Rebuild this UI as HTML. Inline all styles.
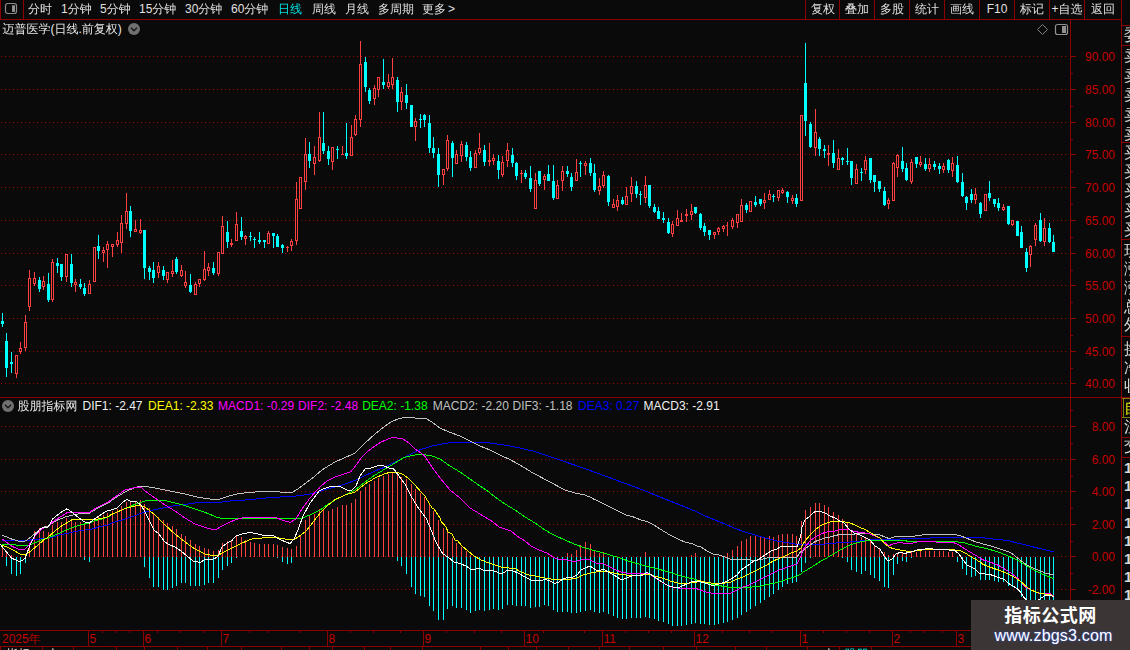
<!DOCTYPE html>
<html><head><meta charset="utf-8"><title>迈普医学</title>
<style>
html,body{margin:0;padding:0;background:#0a0a0a;}
body{width:1130px;height:650px;position:relative;overflow:hidden;font-family:"Liberation Sans","WenQuanYi Zen Hei","Noto Sans CJK SC",sans-serif;font-size:12px;color:#e8e8e8;}
svg{position:absolute;left:0;top:0;}
.top{position:absolute;left:0;top:0;width:1122px;height:19px;border-bottom:1px solid #8c0000;}
.tb{position:absolute;top:0;line-height:19px;height:19px;white-space:nowrap;color:#e0e0e0;font-size:12px;letter-spacing:0px}
.tb.on{color:#00e5e5}
.bt{position:absolute;top:0;height:19px;line-height:19px;text-align:center;border-left:1px solid #8c0000;box-sizing:border-box;color:#e0e0e0;white-space:nowrap}
.ico{position:absolute;left:0;top:0;width:24px;height:19px;border-left:1px solid #8c0000;border-right:1px solid #8c0000;box-sizing:border-box}
.pl{position:absolute;left:1083px;width:32px;height:16px;line-height:16px;color:#c40000;font-size:12px;text-align:right;white-space:nowrap}
.ml{position:absolute;top:632px;height:15px;line-height:15px;color:#c40000;font-size:12px}
.title{position:absolute;left:2.5px;top:21px;height:17px;line-height:17px;font-size:12px;color:#e8e8e8;white-space:nowrap}
.ind{position:absolute;left:0px;top:398px;height:16px;line-height:16px;font-size:12px;white-space:nowrap}
.ind span{position:absolute;top:0}
.side{position:absolute;left:1122px;top:0;width:8px;height:650px;overflow:hidden;border-left:0}
.sr{position:absolute;left:2px;font-size:16px;line-height:18px;color:#d8d8d8;white-space:nowrap}
.wm{position:absolute;left:971px;top:600px;width:159px;height:50px;background:#3c3536;text-align:center}
.wm .a{position:absolute;left:0;width:100%;top:4px;font-family:"Liberation Sans","Noto Sans CJK SC",sans-serif;font-size:18px;font-weight:bold;color:#fff;line-height:24px;letter-spacing:0.5px}
.wm .b{position:absolute;left:3px;width:100%;top:27px;font-size:16px;color:#fff;line-height:18px;letter-spacing:0.18px;text-shadow:0 0 2px #3060ff}
.brt{position:absolute;top:647px;font-size:12px;line-height:14px;color:#f0f0f0;white-space:nowrap}
.circ{position:absolute;width:12px;height:12px;border-radius:50%;background:#707070}
</style></head><body>
<svg width="1130" height="650" viewBox="0 0 1130 650" shape-rendering="crispEdges">
<line x1="1" y1="56.5" x2="1066" y2="56.5" stroke="#a00000" stroke-width="1" stroke-dasharray="1 3"/>
<line x1="1" y1="89.5" x2="1066" y2="89.5" stroke="#a00000" stroke-width="1" stroke-dasharray="1 3"/>
<line x1="1" y1="122.5" x2="1066" y2="122.5" stroke="#a00000" stroke-width="1" stroke-dasharray="1 3"/>
<line x1="1" y1="154.5" x2="1066" y2="154.5" stroke="#a00000" stroke-width="1" stroke-dasharray="1 3"/>
<line x1="1" y1="187.5" x2="1066" y2="187.5" stroke="#a00000" stroke-width="1" stroke-dasharray="1 3"/>
<line x1="1" y1="220.5" x2="1066" y2="220.5" stroke="#a00000" stroke-width="1" stroke-dasharray="1 3"/>
<line x1="1" y1="253.5" x2="1066" y2="253.5" stroke="#a00000" stroke-width="1" stroke-dasharray="1 3"/>
<line x1="1" y1="285.5" x2="1066" y2="285.5" stroke="#a00000" stroke-width="1" stroke-dasharray="1 3"/>
<line x1="1" y1="318.5" x2="1066" y2="318.5" stroke="#a00000" stroke-width="1" stroke-dasharray="1 3"/>
<line x1="1" y1="351.5" x2="1066" y2="351.5" stroke="#a00000" stroke-width="1" stroke-dasharray="1 3"/>
<line x1="1" y1="383.5" x2="1066" y2="383.5" stroke="#a00000" stroke-width="1" stroke-dasharray="1 3"/>
<line x1="1" y1="426.5" x2="1066" y2="426.5" stroke="#a00000" stroke-width="1" stroke-dasharray="1 3"/>
<line x1="1" y1="459.5" x2="1066" y2="459.5" stroke="#a00000" stroke-width="1" stroke-dasharray="1 3"/>
<line x1="1" y1="491.5" x2="1066" y2="491.5" stroke="#a00000" stroke-width="1" stroke-dasharray="1 3"/>
<line x1="1" y1="524.5" x2="1066" y2="524.5" stroke="#a00000" stroke-width="1" stroke-dasharray="1 3"/>
<line x1="1" y1="556.5" x2="1066" y2="556.5" stroke="#a00000" stroke-width="1" stroke-dasharray="1 3"/>
<line x1="1" y1="589.5" x2="1066" y2="589.5" stroke="#a00000" stroke-width="1" stroke-dasharray="1 3"/>
<rect x="2" y="313" width="1" height="14" fill="#00ffff"/>
<rect x="1" y="321" width="3" height="3" fill="#00ffff"/>
<rect x="6" y="333" width="1" height="44" fill="#00ffff"/>
<rect x="5" y="341" width="3" height="27" fill="#00ffff"/>
<rect x="11" y="352" width="1" height="21" fill="#00ffff"/>
<rect x="10" y="362" width="3" height="2" fill="#00ffff"/>
<rect x="16" y="374" width="1" height="4" fill="#ff4040"/>
<rect x="15" y="355" width="3" height="19" fill="#ff4040"/>
<rect x="16" y="356" width="1" height="17" fill="#0a0a0a"/>
<rect x="20" y="342" width="1" height="6" fill="#ff4040"/>
<rect x="20" y="352" width="1" height="2" fill="#ff4040"/>
<rect x="19" y="348" width="3" height="4" fill="#ff4040"/>
<rect x="20" y="349" width="1" height="2" fill="#0a0a0a"/>
<rect x="25" y="315" width="1" height="7" fill="#ff4040"/>
<rect x="25" y="348" width="1" height="3" fill="#ff4040"/>
<rect x="24" y="322" width="3" height="26" fill="#ff4040"/>
<rect x="25" y="323" width="1" height="24" fill="#0a0a0a"/>
<rect x="29" y="270" width="1" height="8" fill="#ff4040"/>
<rect x="29" y="307" width="1" height="4" fill="#ff4040"/>
<rect x="28" y="278" width="3" height="29" fill="#ff4040"/>
<rect x="29" y="279" width="1" height="27" fill="#0a0a0a"/>
<rect x="34" y="272" width="1" height="6" fill="#ff4040"/>
<rect x="34" y="284" width="1" height="2" fill="#ff4040"/>
<rect x="33" y="278" width="3" height="6" fill="#ff4040"/>
<rect x="34" y="279" width="1" height="4" fill="#0a0a0a"/>
<rect x="39" y="277" width="1" height="15" fill="#00ffff"/>
<rect x="38" y="280" width="3" height="9" fill="#00ffff"/>
<rect x="43" y="276" width="1" height="5" fill="#ff4040"/>
<rect x="43" y="287" width="1" height="3" fill="#ff4040"/>
<rect x="42" y="281" width="3" height="6" fill="#ff4040"/>
<rect x="43" y="282" width="1" height="4" fill="#0a0a0a"/>
<rect x="48" y="273" width="1" height="29" fill="#00ffff"/>
<rect x="47" y="284" width="3" height="16" fill="#00ffff"/>
<rect x="52" y="259" width="1" height="3" fill="#ff4040"/>
<rect x="52" y="300" width="1" height="2" fill="#ff4040"/>
<rect x="51" y="262" width="3" height="38" fill="#ff4040"/>
<rect x="52" y="263" width="1" height="36" fill="#0a0a0a"/>
<rect x="57" y="258" width="1" height="15" fill="#00ffff"/>
<rect x="56" y="263" width="3" height="3" fill="#00ffff"/>
<rect x="61" y="264" width="1" height="17" fill="#00ffff"/>
<rect x="60" y="264" width="3" height="13" fill="#00ffff"/>
<rect x="66" y="277" width="1" height="5" fill="#ff4040"/>
<rect x="65" y="254" width="3" height="23" fill="#ff4040"/>
<rect x="66" y="255" width="1" height="21" fill="#0a0a0a"/>
<rect x="71" y="254" width="1" height="33" fill="#00ffff"/>
<rect x="70" y="264" width="3" height="19" fill="#00ffff"/>
<rect x="75" y="279" width="1" height="3" fill="#ff4040"/>
<rect x="75" y="285" width="1" height="7" fill="#ff4040"/>
<rect x="74" y="282" width="3" height="3" fill="#ff4040"/>
<rect x="75" y="283" width="1" height="1" fill="#0a0a0a"/>
<rect x="80" y="279" width="1" height="10" fill="#00ffff"/>
<rect x="79" y="284" width="3" height="3" fill="#00ffff"/>
<rect x="84" y="283" width="1" height="13" fill="#00ffff"/>
<rect x="83" y="288" width="3" height="6" fill="#00ffff"/>
<rect x="89" y="280" width="1" height="4" fill="#ff4040"/>
<rect x="88" y="284" width="3" height="10" fill="#ff4040"/>
<rect x="89" y="285" width="1" height="8" fill="#0a0a0a"/>
<rect x="93" y="247" width="3" height="35" fill="#ff4040"/>
<rect x="94" y="248" width="1" height="33" fill="#0a0a0a"/>
<rect x="98" y="235" width="1" height="24" fill="#00ffff"/>
<rect x="97" y="246" width="3" height="5" fill="#00ffff"/>
<rect x="103" y="247" width="1" height="3" fill="#ff4040"/>
<rect x="103" y="253" width="1" height="9" fill="#ff4040"/>
<rect x="102" y="250" width="3" height="3" fill="#ff4040"/>
<rect x="103" y="251" width="1" height="1" fill="#0a0a0a"/>
<rect x="107" y="241" width="1" height="3" fill="#ff4040"/>
<rect x="107" y="250" width="1" height="18" fill="#ff4040"/>
<rect x="106" y="244" width="3" height="6" fill="#ff4040"/>
<rect x="107" y="245" width="1" height="4" fill="#0a0a0a"/>
<rect x="112" y="247" width="1" height="10" fill="#ff4040"/>
<rect x="111" y="244" width="3" height="3" fill="#ff4040"/>
<rect x="112" y="245" width="1" height="1" fill="#0a0a0a"/>
<rect x="117" y="232" width="1" height="8" fill="#ff4040"/>
<rect x="117" y="245" width="1" height="2" fill="#ff4040"/>
<rect x="116" y="240" width="3" height="5" fill="#ff4040"/>
<rect x="117" y="241" width="1" height="3" fill="#0a0a0a"/>
<rect x="121" y="215" width="1" height="8" fill="#ff4040"/>
<rect x="121" y="243" width="1" height="10" fill="#ff4040"/>
<rect x="120" y="223" width="3" height="20" fill="#ff4040"/>
<rect x="121" y="224" width="1" height="18" fill="#0a0a0a"/>
<rect x="126" y="193" width="1" height="18" fill="#ff4040"/>
<rect x="126" y="224" width="1" height="5" fill="#ff4040"/>
<rect x="125" y="211" width="3" height="13" fill="#ff4040"/>
<rect x="126" y="212" width="1" height="11" fill="#0a0a0a"/>
<rect x="130" y="206" width="1" height="31" fill="#00ffff"/>
<rect x="129" y="211" width="3" height="20" fill="#00ffff"/>
<rect x="135" y="220" width="1" height="9" fill="#ff4040"/>
<rect x="134" y="229" width="3" height="3" fill="#ff4040"/>
<rect x="135" y="230" width="1" height="1" fill="#0a0a0a"/>
<rect x="140" y="219" width="1" height="11" fill="#ff4040"/>
<rect x="140" y="232" width="1" height="2" fill="#ff4040"/>
<rect x="139" y="230" width="3" height="3" fill="#ff4040"/>
<rect x="140" y="231" width="1" height="1" fill="#0a0a0a"/>
<rect x="144" y="230" width="1" height="49" fill="#00ffff"/>
<rect x="143" y="230" width="3" height="38" fill="#00ffff"/>
<rect x="149" y="266" width="1" height="14" fill="#00ffff"/>
<rect x="148" y="268" width="3" height="4" fill="#00ffff"/>
<rect x="153" y="262" width="1" height="21" fill="#00ffff"/>
<rect x="152" y="270" width="3" height="8" fill="#00ffff"/>
<rect x="158" y="262" width="1" height="4" fill="#ff4040"/>
<rect x="158" y="273" width="1" height="5" fill="#ff4040"/>
<rect x="157" y="266" width="3" height="7" fill="#ff4040"/>
<rect x="158" y="267" width="1" height="5" fill="#0a0a0a"/>
<rect x="163" y="266" width="1" height="14" fill="#00ffff"/>
<rect x="162" y="270" width="3" height="6" fill="#00ffff"/>
<rect x="167" y="280" width="1" height="3" fill="#ff4040"/>
<rect x="166" y="272" width="3" height="8" fill="#ff4040"/>
<rect x="167" y="273" width="1" height="6" fill="#0a0a0a"/>
<rect x="172" y="260" width="1" height="11" fill="#ff4040"/>
<rect x="172" y="274" width="1" height="3" fill="#ff4040"/>
<rect x="171" y="271" width="3" height="3" fill="#ff4040"/>
<rect x="172" y="272" width="1" height="1" fill="#0a0a0a"/>
<rect x="176" y="257" width="1" height="17" fill="#00ffff"/>
<rect x="175" y="259" width="3" height="13" fill="#00ffff"/>
<rect x="181" y="265" width="1" height="5" fill="#ff4040"/>
<rect x="181" y="276" width="1" height="1" fill="#ff4040"/>
<rect x="180" y="270" width="3" height="6" fill="#ff4040"/>
<rect x="181" y="271" width="1" height="4" fill="#0a0a0a"/>
<rect x="185" y="271" width="1" height="11" fill="#ff4040"/>
<rect x="185" y="286" width="1" height="2" fill="#ff4040"/>
<rect x="184" y="282" width="3" height="4" fill="#ff4040"/>
<rect x="185" y="283" width="1" height="2" fill="#0a0a0a"/>
<rect x="190" y="274" width="1" height="19" fill="#00ffff"/>
<rect x="189" y="285" width="3" height="7" fill="#00ffff"/>
<rect x="195" y="282" width="1" height="2" fill="#ff4040"/>
<rect x="194" y="284" width="3" height="11" fill="#ff4040"/>
<rect x="195" y="285" width="1" height="9" fill="#0a0a0a"/>
<rect x="199" y="284" width="1" height="3" fill="#ff4040"/>
<rect x="198" y="279" width="3" height="5" fill="#ff4040"/>
<rect x="199" y="280" width="1" height="3" fill="#0a0a0a"/>
<rect x="204" y="251" width="1" height="18" fill="#ff4040"/>
<rect x="204" y="280" width="1" height="1" fill="#ff4040"/>
<rect x="203" y="269" width="3" height="11" fill="#ff4040"/>
<rect x="204" y="270" width="1" height="9" fill="#0a0a0a"/>
<rect x="208" y="263" width="1" height="4" fill="#ff4040"/>
<rect x="208" y="271" width="1" height="5" fill="#ff4040"/>
<rect x="207" y="267" width="3" height="4" fill="#ff4040"/>
<rect x="208" y="268" width="1" height="2" fill="#0a0a0a"/>
<rect x="213" y="262" width="1" height="13" fill="#00ffff"/>
<rect x="212" y="268" width="3" height="5" fill="#00ffff"/>
<rect x="218" y="274" width="1" height="2" fill="#ff4040"/>
<rect x="217" y="252" width="3" height="22" fill="#ff4040"/>
<rect x="218" y="253" width="1" height="20" fill="#0a0a0a"/>
<rect x="222" y="216" width="1" height="10" fill="#ff4040"/>
<rect x="221" y="226" width="3" height="28" fill="#ff4040"/>
<rect x="222" y="227" width="1" height="26" fill="#0a0a0a"/>
<rect x="227" y="221" width="1" height="27" fill="#00ffff"/>
<rect x="226" y="232" width="3" height="10" fill="#00ffff"/>
<rect x="231" y="239" width="1" height="8" fill="#ff4040"/>
<rect x="230" y="243" width="3" height="2" fill="#ff4040"/>
<rect x="236" y="212" width="1" height="12" fill="#ff4040"/>
<rect x="235" y="224" width="3" height="17" fill="#ff4040"/>
<rect x="236" y="225" width="1" height="15" fill="#0a0a0a"/>
<rect x="241" y="217" width="1" height="23" fill="#00ffff"/>
<rect x="240" y="231" width="3" height="6" fill="#00ffff"/>
<rect x="245" y="235" width="1" height="1" fill="#ff4040"/>
<rect x="245" y="239" width="1" height="6" fill="#ff4040"/>
<rect x="244" y="236" width="3" height="3" fill="#ff4040"/>
<rect x="245" y="237" width="1" height="1" fill="#0a0a0a"/>
<rect x="250" y="232" width="1" height="9" fill="#00ffff"/>
<rect x="249" y="236" width="3" height="1" fill="#00ffff"/>
<rect x="254" y="237" width="1" height="11" fill="#00ffff"/>
<rect x="253" y="239" width="3" height="1" fill="#00ffff"/>
<rect x="259" y="232" width="1" height="12" fill="#00ffff"/>
<rect x="258" y="240" width="3" height="2" fill="#00ffff"/>
<rect x="264" y="240" width="1" height="8" fill="#00ffff"/>
<rect x="263" y="240" width="3" height="2" fill="#00ffff"/>
<rect x="268" y="231" width="1" height="2" fill="#ff4040"/>
<rect x="267" y="233" width="3" height="11" fill="#ff4040"/>
<rect x="268" y="234" width="1" height="9" fill="#0a0a0a"/>
<rect x="273" y="233" width="1" height="15" fill="#00ffff"/>
<rect x="272" y="233" width="3" height="3" fill="#00ffff"/>
<rect x="277" y="234" width="1" height="13" fill="#00ffff"/>
<rect x="276" y="236" width="3" height="11" fill="#00ffff"/>
<rect x="282" y="244" width="1" height="9" fill="#00ffff"/>
<rect x="281" y="245" width="3" height="3" fill="#00ffff"/>
<rect x="287" y="246" width="1" height="6" fill="#ff4040"/>
<rect x="286" y="247" width="3" height="1" fill="#ff4040"/>
<rect x="291" y="239" width="1" height="2" fill="#ff4040"/>
<rect x="291" y="246" width="1" height="5" fill="#ff4040"/>
<rect x="290" y="241" width="3" height="5" fill="#ff4040"/>
<rect x="291" y="242" width="1" height="3" fill="#0a0a0a"/>
<rect x="296" y="182" width="1" height="17" fill="#ff4040"/>
<rect x="296" y="241" width="1" height="4" fill="#ff4040"/>
<rect x="295" y="199" width="3" height="42" fill="#ff4040"/>
<rect x="296" y="200" width="1" height="40" fill="#0a0a0a"/>
<rect x="299" y="177" width="3" height="32" fill="#ff4040"/>
<rect x="300" y="178" width="1" height="30" fill="#0a0a0a"/>
<rect x="305" y="138" width="1" height="16" fill="#ff4040"/>
<rect x="305" y="182" width="1" height="8" fill="#ff4040"/>
<rect x="304" y="154" width="3" height="28" fill="#ff4040"/>
<rect x="305" y="155" width="1" height="26" fill="#0a0a0a"/>
<rect x="309" y="142" width="1" height="26" fill="#00ffff"/>
<rect x="308" y="154" width="3" height="7" fill="#00ffff"/>
<rect x="314" y="146" width="1" height="11" fill="#ff4040"/>
<rect x="314" y="164" width="1" height="11" fill="#ff4040"/>
<rect x="313" y="157" width="3" height="7" fill="#ff4040"/>
<rect x="314" y="158" width="1" height="5" fill="#0a0a0a"/>
<rect x="319" y="112" width="1" height="25" fill="#ff4040"/>
<rect x="319" y="161" width="1" height="1" fill="#ff4040"/>
<rect x="318" y="137" width="3" height="24" fill="#ff4040"/>
<rect x="319" y="138" width="1" height="22" fill="#0a0a0a"/>
<rect x="323" y="112" width="1" height="42" fill="#00ffff"/>
<rect x="322" y="143" width="3" height="8" fill="#00ffff"/>
<rect x="328" y="146" width="1" height="19" fill="#00ffff"/>
<rect x="327" y="151" width="3" height="8" fill="#00ffff"/>
<rect x="332" y="162" width="1" height="8" fill="#ff4040"/>
<rect x="331" y="147" width="3" height="15" fill="#ff4040"/>
<rect x="332" y="148" width="1" height="13" fill="#0a0a0a"/>
<rect x="337" y="146" width="1" height="13" fill="#00ffff"/>
<rect x="336" y="149" width="3" height="1" fill="#00ffff"/>
<rect x="342" y="146" width="1" height="9" fill="#ff4040"/>
<rect x="341" y="154" width="3" height="1" fill="#ff4040"/>
<rect x="346" y="123" width="1" height="36" fill="#00ffff"/>
<rect x="345" y="153" width="3" height="3" fill="#00ffff"/>
<rect x="351" y="125" width="1" height="12" fill="#ff4040"/>
<rect x="350" y="137" width="3" height="19" fill="#ff4040"/>
<rect x="351" y="138" width="1" height="17" fill="#0a0a0a"/>
<rect x="355" y="115" width="1" height="4" fill="#ff4040"/>
<rect x="355" y="135" width="1" height="1" fill="#ff4040"/>
<rect x="354" y="119" width="3" height="16" fill="#ff4040"/>
<rect x="355" y="120" width="1" height="14" fill="#0a0a0a"/>
<rect x="360" y="41" width="1" height="23" fill="#ff4040"/>
<rect x="360" y="120" width="1" height="7" fill="#ff4040"/>
<rect x="359" y="64" width="3" height="56" fill="#ff4040"/>
<rect x="360" y="65" width="1" height="54" fill="#0a0a0a"/>
<rect x="365" y="57" width="1" height="35" fill="#00ffff"/>
<rect x="364" y="62" width="3" height="25" fill="#00ffff"/>
<rect x="369" y="88" width="1" height="16" fill="#00ffff"/>
<rect x="368" y="90" width="3" height="11" fill="#00ffff"/>
<rect x="374" y="85" width="1" height="3" fill="#ff4040"/>
<rect x="374" y="99" width="1" height="6" fill="#ff4040"/>
<rect x="373" y="88" width="3" height="11" fill="#ff4040"/>
<rect x="374" y="89" width="1" height="9" fill="#0a0a0a"/>
<rect x="378" y="90" width="1" height="7" fill="#ff4040"/>
<rect x="377" y="77" width="3" height="13" fill="#ff4040"/>
<rect x="378" y="78" width="1" height="11" fill="#0a0a0a"/>
<rect x="383" y="59" width="1" height="30" fill="#00ffff"/>
<rect x="382" y="82" width="3" height="3" fill="#00ffff"/>
<rect x="388" y="74" width="1" height="8" fill="#ff4040"/>
<rect x="388" y="87" width="1" height="2" fill="#ff4040"/>
<rect x="387" y="82" width="3" height="5" fill="#ff4040"/>
<rect x="388" y="83" width="1" height="3" fill="#0a0a0a"/>
<rect x="392" y="58" width="1" height="19" fill="#ff4040"/>
<rect x="392" y="85" width="1" height="4" fill="#ff4040"/>
<rect x="391" y="77" width="3" height="8" fill="#ff4040"/>
<rect x="392" y="78" width="1" height="6" fill="#0a0a0a"/>
<rect x="397" y="77" width="1" height="35" fill="#00ffff"/>
<rect x="396" y="80" width="3" height="22" fill="#00ffff"/>
<rect x="401" y="87" width="1" height="5" fill="#ff4040"/>
<rect x="401" y="102" width="1" height="8" fill="#ff4040"/>
<rect x="400" y="92" width="3" height="10" fill="#ff4040"/>
<rect x="401" y="93" width="1" height="8" fill="#0a0a0a"/>
<rect x="406" y="84" width="1" height="25" fill="#00ffff"/>
<rect x="405" y="95" width="3" height="8" fill="#00ffff"/>
<rect x="411" y="105" width="1" height="22" fill="#00ffff"/>
<rect x="410" y="105" width="3" height="22" fill="#00ffff"/>
<rect x="415" y="118" width="1" height="3" fill="#ff4040"/>
<rect x="415" y="127" width="1" height="14" fill="#ff4040"/>
<rect x="414" y="121" width="3" height="6" fill="#ff4040"/>
<rect x="415" y="122" width="1" height="4" fill="#0a0a0a"/>
<rect x="420" y="114" width="1" height="14" fill="#00ffff"/>
<rect x="419" y="119" width="3" height="1" fill="#00ffff"/>
<rect x="424" y="114" width="1" height="13" fill="#00ffff"/>
<rect x="423" y="115" width="3" height="5" fill="#00ffff"/>
<rect x="429" y="115" width="1" height="38" fill="#00ffff"/>
<rect x="428" y="123" width="3" height="25" fill="#00ffff"/>
<rect x="433" y="137" width="1" height="21" fill="#00ffff"/>
<rect x="432" y="148" width="3" height="5" fill="#00ffff"/>
<rect x="438" y="148" width="1" height="39" fill="#00ffff"/>
<rect x="437" y="154" width="3" height="21" fill="#00ffff"/>
<rect x="443" y="175" width="1" height="10" fill="#ff4040"/>
<rect x="442" y="169" width="3" height="6" fill="#ff4040"/>
<rect x="443" y="170" width="1" height="4" fill="#0a0a0a"/>
<rect x="447" y="135" width="1" height="5" fill="#ff4040"/>
<rect x="447" y="169" width="1" height="2" fill="#ff4040"/>
<rect x="446" y="140" width="3" height="29" fill="#ff4040"/>
<rect x="447" y="141" width="1" height="27" fill="#0a0a0a"/>
<rect x="452" y="141" width="1" height="36" fill="#00ffff"/>
<rect x="451" y="143" width="3" height="15" fill="#00ffff"/>
<rect x="456" y="150" width="1" height="4" fill="#ff4040"/>
<rect x="455" y="154" width="3" height="10" fill="#ff4040"/>
<rect x="456" y="155" width="1" height="8" fill="#0a0a0a"/>
<rect x="461" y="141" width="1" height="3" fill="#ff4040"/>
<rect x="461" y="156" width="1" height="6" fill="#ff4040"/>
<rect x="460" y="144" width="3" height="12" fill="#ff4040"/>
<rect x="461" y="145" width="1" height="10" fill="#0a0a0a"/>
<rect x="466" y="142" width="1" height="19" fill="#00ffff"/>
<rect x="465" y="145" width="3" height="12" fill="#00ffff"/>
<rect x="470" y="151" width="1" height="20" fill="#00ffff"/>
<rect x="469" y="157" width="3" height="11" fill="#00ffff"/>
<rect x="475" y="150" width="1" height="3" fill="#ff4040"/>
<rect x="474" y="153" width="3" height="15" fill="#ff4040"/>
<rect x="475" y="154" width="1" height="13" fill="#0a0a0a"/>
<rect x="479" y="133" width="1" height="15" fill="#ff4040"/>
<rect x="479" y="153" width="1" height="2" fill="#ff4040"/>
<rect x="478" y="148" width="3" height="5" fill="#ff4040"/>
<rect x="479" y="149" width="1" height="3" fill="#0a0a0a"/>
<rect x="484" y="145" width="1" height="21" fill="#00ffff"/>
<rect x="483" y="150" width="3" height="12" fill="#00ffff"/>
<rect x="489" y="143" width="1" height="23" fill="#ff4040"/>
<rect x="488" y="160" width="3" height="2" fill="#ff4040"/>
<rect x="493" y="154" width="1" height="4" fill="#ff4040"/>
<rect x="493" y="161" width="1" height="4" fill="#ff4040"/>
<rect x="492" y="158" width="3" height="3" fill="#ff4040"/>
<rect x="493" y="159" width="1" height="1" fill="#0a0a0a"/>
<rect x="498" y="155" width="1" height="24" fill="#00ffff"/>
<rect x="497" y="161" width="3" height="9" fill="#00ffff"/>
<rect x="502" y="156" width="1" height="6" fill="#ff4040"/>
<rect x="502" y="175" width="1" height="2" fill="#ff4040"/>
<rect x="501" y="162" width="3" height="13" fill="#ff4040"/>
<rect x="502" y="163" width="1" height="11" fill="#0a0a0a"/>
<rect x="507" y="143" width="1" height="7" fill="#ff4040"/>
<rect x="507" y="161" width="1" height="6" fill="#ff4040"/>
<rect x="506" y="150" width="3" height="11" fill="#ff4040"/>
<rect x="507" y="151" width="1" height="9" fill="#0a0a0a"/>
<rect x="512" y="148" width="1" height="19" fill="#00ffff"/>
<rect x="511" y="155" width="3" height="8" fill="#00ffff"/>
<rect x="516" y="162" width="1" height="18" fill="#00ffff"/>
<rect x="515" y="163" width="3" height="13" fill="#00ffff"/>
<rect x="521" y="170" width="1" height="13" fill="#ff4040"/>
<rect x="520" y="173" width="3" height="1" fill="#ff4040"/>
<rect x="525" y="170" width="1" height="9" fill="#00ffff"/>
<rect x="524" y="173" width="3" height="4" fill="#00ffff"/>
<rect x="530" y="166" width="1" height="26" fill="#00ffff"/>
<rect x="529" y="178" width="3" height="11" fill="#00ffff"/>
<rect x="535" y="173" width="1" height="7" fill="#ff4040"/>
<rect x="534" y="180" width="3" height="29" fill="#ff4040"/>
<rect x="535" y="181" width="1" height="27" fill="#0a0a0a"/>
<rect x="539" y="171" width="1" height="15" fill="#00ffff"/>
<rect x="538" y="171" width="3" height="13" fill="#00ffff"/>
<rect x="544" y="174" width="1" height="2" fill="#ff4040"/>
<rect x="544" y="180" width="1" height="10" fill="#ff4040"/>
<rect x="543" y="176" width="3" height="4" fill="#ff4040"/>
<rect x="544" y="177" width="1" height="2" fill="#0a0a0a"/>
<rect x="548" y="165" width="1" height="16" fill="#00ffff"/>
<rect x="547" y="174" width="3" height="7" fill="#00ffff"/>
<rect x="553" y="165" width="1" height="35" fill="#00ffff"/>
<rect x="552" y="181" width="3" height="17" fill="#00ffff"/>
<rect x="557" y="180" width="1" height="5" fill="#ff4040"/>
<rect x="556" y="185" width="3" height="14" fill="#ff4040"/>
<rect x="557" y="186" width="1" height="12" fill="#0a0a0a"/>
<rect x="562" y="166" width="1" height="5" fill="#ff4040"/>
<rect x="562" y="181" width="1" height="10" fill="#ff4040"/>
<rect x="561" y="171" width="3" height="10" fill="#ff4040"/>
<rect x="562" y="172" width="1" height="8" fill="#0a0a0a"/>
<rect x="567" y="166" width="1" height="11" fill="#00ffff"/>
<rect x="566" y="171" width="3" height="3" fill="#00ffff"/>
<rect x="571" y="173" width="1" height="18" fill="#00ffff"/>
<rect x="570" y="177" width="3" height="10" fill="#00ffff"/>
<rect x="576" y="159" width="1" height="13" fill="#ff4040"/>
<rect x="575" y="172" width="3" height="9" fill="#ff4040"/>
<rect x="576" y="173" width="1" height="7" fill="#0a0a0a"/>
<rect x="580" y="161" width="1" height="16" fill="#00ffff"/>
<rect x="579" y="163" width="3" height="1" fill="#00ffff"/>
<rect x="585" y="161" width="1" height="2" fill="#ff4040"/>
<rect x="585" y="166" width="1" height="9" fill="#ff4040"/>
<rect x="584" y="163" width="3" height="3" fill="#ff4040"/>
<rect x="585" y="164" width="1" height="1" fill="#0a0a0a"/>
<rect x="590" y="158" width="1" height="18" fill="#00ffff"/>
<rect x="589" y="163" width="3" height="10" fill="#00ffff"/>
<rect x="594" y="164" width="1" height="28" fill="#00ffff"/>
<rect x="593" y="173" width="3" height="17" fill="#00ffff"/>
<rect x="599" y="178" width="1" height="8" fill="#ff4040"/>
<rect x="599" y="191" width="1" height="4" fill="#ff4040"/>
<rect x="598" y="186" width="3" height="5" fill="#ff4040"/>
<rect x="599" y="187" width="1" height="3" fill="#0a0a0a"/>
<rect x="603" y="171" width="1" height="4" fill="#ff4040"/>
<rect x="603" y="186" width="1" height="2" fill="#ff4040"/>
<rect x="602" y="175" width="3" height="11" fill="#ff4040"/>
<rect x="603" y="176" width="1" height="9" fill="#0a0a0a"/>
<rect x="608" y="175" width="1" height="31" fill="#00ffff"/>
<rect x="607" y="176" width="3" height="26" fill="#00ffff"/>
<rect x="613" y="199" width="1" height="5" fill="#ff4040"/>
<rect x="612" y="204" width="3" height="4" fill="#ff4040"/>
<rect x="613" y="205" width="1" height="2" fill="#0a0a0a"/>
<rect x="617" y="195" width="1" height="5" fill="#ff4040"/>
<rect x="617" y="207" width="1" height="4" fill="#ff4040"/>
<rect x="616" y="200" width="3" height="7" fill="#ff4040"/>
<rect x="617" y="201" width="1" height="5" fill="#0a0a0a"/>
<rect x="622" y="197" width="1" height="8" fill="#00ffff"/>
<rect x="621" y="200" width="3" height="4" fill="#00ffff"/>
<rect x="626" y="187" width="1" height="9" fill="#ff4040"/>
<rect x="625" y="196" width="3" height="9" fill="#ff4040"/>
<rect x="626" y="197" width="1" height="7" fill="#0a0a0a"/>
<rect x="631" y="177" width="1" height="9" fill="#ff4040"/>
<rect x="631" y="194" width="1" height="8" fill="#ff4040"/>
<rect x="630" y="186" width="3" height="8" fill="#ff4040"/>
<rect x="631" y="187" width="1" height="6" fill="#0a0a0a"/>
<rect x="636" y="181" width="1" height="17" fill="#00ffff"/>
<rect x="635" y="186" width="3" height="8" fill="#00ffff"/>
<rect x="640" y="191" width="1" height="14" fill="#00ffff"/>
<rect x="639" y="194" width="3" height="1" fill="#00ffff"/>
<rect x="645" y="176" width="1" height="9" fill="#ff4040"/>
<rect x="645" y="198" width="1" height="5" fill="#ff4040"/>
<rect x="644" y="185" width="3" height="13" fill="#ff4040"/>
<rect x="645" y="186" width="1" height="11" fill="#0a0a0a"/>
<rect x="649" y="185" width="1" height="23" fill="#00ffff"/>
<rect x="648" y="185" width="3" height="21" fill="#00ffff"/>
<rect x="654" y="204" width="1" height="9" fill="#00ffff"/>
<rect x="653" y="207" width="3" height="5" fill="#00ffff"/>
<rect x="658" y="207" width="1" height="12" fill="#00ffff"/>
<rect x="657" y="211" width="3" height="8" fill="#00ffff"/>
<rect x="663" y="212" width="1" height="11" fill="#00ffff"/>
<rect x="662" y="218" width="3" height="2" fill="#00ffff"/>
<rect x="668" y="218" width="1" height="16" fill="#00ffff"/>
<rect x="667" y="222" width="3" height="11" fill="#00ffff"/>
<rect x="672" y="221" width="1" height="3" fill="#ff4040"/>
<rect x="672" y="234" width="1" height="3" fill="#ff4040"/>
<rect x="671" y="224" width="3" height="10" fill="#ff4040"/>
<rect x="672" y="225" width="1" height="8" fill="#0a0a0a"/>
<rect x="677" y="210" width="1" height="8" fill="#ff4040"/>
<rect x="676" y="218" width="3" height="8" fill="#ff4040"/>
<rect x="677" y="219" width="1" height="6" fill="#0a0a0a"/>
<rect x="681" y="213" width="1" height="9" fill="#ff4040"/>
<rect x="680" y="220" width="3" height="2" fill="#ff4040"/>
<rect x="686" y="209" width="1" height="13" fill="#ff4040"/>
<rect x="685" y="214" width="3" height="2" fill="#ff4040"/>
<rect x="691" y="204" width="1" height="7" fill="#ff4040"/>
<rect x="691" y="215" width="1" height="5" fill="#ff4040"/>
<rect x="690" y="211" width="3" height="4" fill="#ff4040"/>
<rect x="691" y="212" width="1" height="2" fill="#0a0a0a"/>
<rect x="695" y="207" width="1" height="7" fill="#00ffff"/>
<rect x="694" y="207" width="3" height="6" fill="#00ffff"/>
<rect x="700" y="213" width="1" height="17" fill="#00ffff"/>
<rect x="699" y="214" width="3" height="14" fill="#00ffff"/>
<rect x="704" y="223" width="1" height="13" fill="#00ffff"/>
<rect x="703" y="226" width="3" height="6" fill="#00ffff"/>
<rect x="709" y="230" width="1" height="10" fill="#00ffff"/>
<rect x="708" y="230" width="3" height="5" fill="#00ffff"/>
<rect x="714" y="235" width="1" height="4" fill="#ff4040"/>
<rect x="713" y="232" width="3" height="3" fill="#ff4040"/>
<rect x="714" y="233" width="1" height="1" fill="#0a0a0a"/>
<rect x="718" y="227" width="1" height="1" fill="#ff4040"/>
<rect x="718" y="232" width="1" height="3" fill="#ff4040"/>
<rect x="717" y="228" width="3" height="4" fill="#ff4040"/>
<rect x="718" y="229" width="1" height="2" fill="#0a0a0a"/>
<rect x="723" y="225" width="1" height="1" fill="#ff4040"/>
<rect x="723" y="228" width="1" height="4" fill="#ff4040"/>
<rect x="722" y="226" width="3" height="3" fill="#ff4040"/>
<rect x="723" y="227" width="1" height="1" fill="#0a0a0a"/>
<rect x="727" y="222" width="1" height="14" fill="#ff4040"/>
<rect x="726" y="225" width="2" height="1" fill="#ff4040"/>
<rect x="732" y="218" width="1" height="2" fill="#ff4040"/>
<rect x="732" y="227" width="1" height="2" fill="#ff4040"/>
<rect x="731" y="220" width="3" height="7" fill="#ff4040"/>
<rect x="732" y="221" width="1" height="5" fill="#0a0a0a"/>
<rect x="737" y="223" width="1" height="5" fill="#ff4040"/>
<rect x="736" y="214" width="3" height="9" fill="#ff4040"/>
<rect x="737" y="215" width="1" height="7" fill="#0a0a0a"/>
<rect x="741" y="199" width="1" height="6" fill="#ff4040"/>
<rect x="740" y="205" width="3" height="17" fill="#ff4040"/>
<rect x="741" y="206" width="1" height="15" fill="#0a0a0a"/>
<rect x="746" y="203" width="1" height="10" fill="#00ffff"/>
<rect x="745" y="205" width="3" height="5" fill="#00ffff"/>
<rect x="749" y="201" width="3" height="11" fill="#ff4040"/>
<rect x="750" y="202" width="1" height="9" fill="#0a0a0a"/>
<rect x="755" y="196" width="1" height="11" fill="#00ffff"/>
<rect x="754" y="202" width="3" height="3" fill="#00ffff"/>
<rect x="760" y="199" width="1" height="7" fill="#00ffff"/>
<rect x="759" y="199" width="3" height="5" fill="#00ffff"/>
<rect x="764" y="193" width="1" height="7" fill="#ff4040"/>
<rect x="764" y="203" width="1" height="6" fill="#ff4040"/>
<rect x="763" y="200" width="3" height="3" fill="#ff4040"/>
<rect x="764" y="201" width="1" height="1" fill="#0a0a0a"/>
<rect x="769" y="190" width="1" height="4" fill="#ff4040"/>
<rect x="768" y="194" width="3" height="6" fill="#ff4040"/>
<rect x="769" y="195" width="1" height="4" fill="#0a0a0a"/>
<rect x="773" y="194" width="1" height="8" fill="#00ffff"/>
<rect x="772" y="196" width="3" height="1" fill="#00ffff"/>
<rect x="778" y="198" width="1" height="3" fill="#ff4040"/>
<rect x="777" y="190" width="3" height="8" fill="#ff4040"/>
<rect x="778" y="191" width="1" height="6" fill="#0a0a0a"/>
<rect x="782" y="188" width="1" height="2" fill="#ff4040"/>
<rect x="782" y="193" width="1" height="1" fill="#ff4040"/>
<rect x="781" y="190" width="3" height="3" fill="#ff4040"/>
<rect x="782" y="191" width="1" height="1" fill="#0a0a0a"/>
<rect x="787" y="191" width="1" height="12" fill="#00ffff"/>
<rect x="786" y="192" width="3" height="5" fill="#00ffff"/>
<rect x="792" y="195" width="1" height="3" fill="#ff4040"/>
<rect x="792" y="200" width="1" height="4" fill="#ff4040"/>
<rect x="791" y="198" width="3" height="3" fill="#ff4040"/>
<rect x="792" y="199" width="1" height="1" fill="#0a0a0a"/>
<rect x="796" y="194" width="1" height="13" fill="#00ffff"/>
<rect x="795" y="198" width="3" height="6" fill="#00ffff"/>
<rect x="800" y="115" width="3" height="86" fill="#ff4040"/>
<rect x="801" y="116" width="1" height="84" fill="#0a0a0a"/>
<rect x="805" y="43" width="1" height="93" fill="#00ffff"/>
<rect x="804" y="83" width="3" height="38" fill="#00ffff"/>
<rect x="810" y="122" width="1" height="26" fill="#00ffff"/>
<rect x="809" y="124" width="3" height="23" fill="#00ffff"/>
<rect x="815" y="109" width="1" height="23" fill="#ff4040"/>
<rect x="815" y="148" width="1" height="8" fill="#ff4040"/>
<rect x="814" y="132" width="3" height="16" fill="#ff4040"/>
<rect x="815" y="133" width="1" height="14" fill="#0a0a0a"/>
<rect x="819" y="137" width="1" height="19" fill="#00ffff"/>
<rect x="818" y="139" width="3" height="10" fill="#00ffff"/>
<rect x="824" y="145" width="1" height="13" fill="#00ffff"/>
<rect x="823" y="149" width="3" height="2" fill="#00ffff"/>
<rect x="828" y="145" width="1" height="21" fill="#ff4040"/>
<rect x="827" y="153" width="3" height="2" fill="#ff4040"/>
<rect x="833" y="140" width="1" height="28" fill="#00ffff"/>
<rect x="832" y="153" width="3" height="10" fill="#00ffff"/>
<rect x="838" y="149" width="1" height="9" fill="#ff4040"/>
<rect x="837" y="158" width="3" height="12" fill="#ff4040"/>
<rect x="838" y="159" width="1" height="10" fill="#0a0a0a"/>
<rect x="842" y="157" width="1" height="8" fill="#00ffff"/>
<rect x="841" y="158" width="3" height="2" fill="#00ffff"/>
<rect x="847" y="148" width="1" height="17" fill="#00ffff"/>
<rect x="846" y="161" width="3" height="1" fill="#00ffff"/>
<rect x="851" y="161" width="1" height="24" fill="#00ffff"/>
<rect x="850" y="161" width="3" height="17" fill="#00ffff"/>
<rect x="856" y="164" width="1" height="5" fill="#ff4040"/>
<rect x="855" y="169" width="3" height="15" fill="#ff4040"/>
<rect x="856" y="170" width="1" height="13" fill="#0a0a0a"/>
<rect x="861" y="168" width="1" height="13" fill="#00ffff"/>
<rect x="860" y="172" width="3" height="1" fill="#00ffff"/>
<rect x="865" y="156" width="1" height="4" fill="#ff4040"/>
<rect x="865" y="170" width="1" height="4" fill="#ff4040"/>
<rect x="864" y="160" width="3" height="10" fill="#ff4040"/>
<rect x="865" y="161" width="1" height="8" fill="#0a0a0a"/>
<rect x="870" y="158" width="1" height="25" fill="#00ffff"/>
<rect x="869" y="158" width="3" height="22" fill="#00ffff"/>
<rect x="874" y="175" width="1" height="17" fill="#00ffff"/>
<rect x="873" y="175" width="3" height="7" fill="#00ffff"/>
<rect x="879" y="181" width="1" height="11" fill="#00ffff"/>
<rect x="878" y="181" width="3" height="8" fill="#00ffff"/>
<rect x="884" y="187" width="1" height="19" fill="#00ffff"/>
<rect x="883" y="191" width="3" height="14" fill="#00ffff"/>
<rect x="888" y="198" width="1" height="2" fill="#ff4040"/>
<rect x="888" y="204" width="1" height="5" fill="#ff4040"/>
<rect x="887" y="200" width="3" height="4" fill="#ff4040"/>
<rect x="888" y="201" width="1" height="2" fill="#0a0a0a"/>
<rect x="893" y="162" width="1" height="1" fill="#ff4040"/>
<rect x="892" y="163" width="3" height="38" fill="#ff4040"/>
<rect x="893" y="164" width="1" height="36" fill="#0a0a0a"/>
<rect x="897" y="154" width="1" height="1" fill="#ff4040"/>
<rect x="897" y="168" width="1" height="9" fill="#ff4040"/>
<rect x="896" y="155" width="3" height="13" fill="#ff4040"/>
<rect x="897" y="156" width="1" height="11" fill="#0a0a0a"/>
<rect x="902" y="147" width="1" height="25" fill="#00ffff"/>
<rect x="901" y="161" width="3" height="8" fill="#00ffff"/>
<rect x="906" y="163" width="1" height="18" fill="#00ffff"/>
<rect x="905" y="168" width="3" height="12" fill="#00ffff"/>
<rect x="911" y="159" width="1" height="3" fill="#ff4040"/>
<rect x="911" y="182" width="1" height="2" fill="#ff4040"/>
<rect x="910" y="162" width="3" height="20" fill="#ff4040"/>
<rect x="911" y="163" width="1" height="18" fill="#0a0a0a"/>
<rect x="916" y="157" width="1" height="11" fill="#00ffff"/>
<rect x="915" y="157" width="3" height="7" fill="#00ffff"/>
<rect x="920" y="156" width="1" height="6" fill="#ff4040"/>
<rect x="920" y="165" width="1" height="2" fill="#ff4040"/>
<rect x="919" y="162" width="3" height="3" fill="#ff4040"/>
<rect x="920" y="163" width="1" height="1" fill="#0a0a0a"/>
<rect x="925" y="158" width="1" height="13" fill="#00ffff"/>
<rect x="924" y="164" width="3" height="5" fill="#00ffff"/>
<rect x="929" y="158" width="1" height="6" fill="#ff4040"/>
<rect x="929" y="169" width="1" height="3" fill="#ff4040"/>
<rect x="928" y="164" width="3" height="5" fill="#ff4040"/>
<rect x="929" y="165" width="1" height="3" fill="#0a0a0a"/>
<rect x="934" y="161" width="1" height="9" fill="#00ffff"/>
<rect x="933" y="164" width="3" height="3" fill="#00ffff"/>
<rect x="939" y="163" width="1" height="11" fill="#00ffff"/>
<rect x="938" y="166" width="3" height="3" fill="#00ffff"/>
<rect x="943" y="163" width="1" height="3" fill="#ff4040"/>
<rect x="943" y="170" width="1" height="3" fill="#ff4040"/>
<rect x="942" y="166" width="3" height="4" fill="#ff4040"/>
<rect x="943" y="167" width="1" height="2" fill="#0a0a0a"/>
<rect x="948" y="159" width="1" height="14" fill="#00ffff"/>
<rect x="947" y="160" width="3" height="10" fill="#00ffff"/>
<rect x="952" y="157" width="1" height="6" fill="#ff4040"/>
<rect x="952" y="171" width="1" height="6" fill="#ff4040"/>
<rect x="951" y="163" width="3" height="8" fill="#ff4040"/>
<rect x="952" y="164" width="1" height="6" fill="#0a0a0a"/>
<rect x="957" y="156" width="1" height="27" fill="#00ffff"/>
<rect x="956" y="165" width="3" height="17" fill="#00ffff"/>
<rect x="962" y="173" width="1" height="24" fill="#00ffff"/>
<rect x="961" y="182" width="3" height="14" fill="#00ffff"/>
<rect x="966" y="196" width="1" height="14" fill="#00ffff"/>
<rect x="965" y="197" width="3" height="6" fill="#00ffff"/>
<rect x="971" y="189" width="1" height="14" fill="#00ffff"/>
<rect x="970" y="194" width="3" height="6" fill="#00ffff"/>
<rect x="975" y="188" width="1" height="6" fill="#ff4040"/>
<rect x="975" y="200" width="1" height="4" fill="#ff4040"/>
<rect x="974" y="194" width="3" height="6" fill="#ff4040"/>
<rect x="975" y="195" width="1" height="4" fill="#0a0a0a"/>
<rect x="980" y="202" width="1" height="16" fill="#00ffff"/>
<rect x="979" y="203" width="3" height="11" fill="#00ffff"/>
<rect x="984" y="194" width="3" height="17" fill="#ff4040"/>
<rect x="985" y="195" width="1" height="15" fill="#0a0a0a"/>
<rect x="989" y="181" width="1" height="20" fill="#00ffff"/>
<rect x="988" y="193" width="3" height="5" fill="#00ffff"/>
<rect x="994" y="199" width="1" height="8" fill="#00ffff"/>
<rect x="993" y="199" width="3" height="5" fill="#00ffff"/>
<rect x="998" y="198" width="1" height="13" fill="#00ffff"/>
<rect x="997" y="203" width="3" height="5" fill="#00ffff"/>
<rect x="1003" y="204" width="1" height="3" fill="#ff4040"/>
<rect x="1003" y="210" width="1" height="1" fill="#ff4040"/>
<rect x="1002" y="207" width="3" height="3" fill="#ff4040"/>
<rect x="1003" y="208" width="1" height="1" fill="#0a0a0a"/>
<rect x="1008" y="206" width="1" height="19" fill="#00ffff"/>
<rect x="1007" y="206" width="3" height="18" fill="#00ffff"/>
<rect x="1012" y="225" width="1" height="1" fill="#ff4040"/>
<rect x="1011" y="220" width="3" height="5" fill="#ff4040"/>
<rect x="1012" y="221" width="1" height="3" fill="#0a0a0a"/>
<rect x="1017" y="221" width="1" height="15" fill="#00ffff"/>
<rect x="1016" y="221" width="3" height="15" fill="#00ffff"/>
<rect x="1021" y="226" width="1" height="22" fill="#00ffff"/>
<rect x="1020" y="232" width="3" height="16" fill="#00ffff"/>
<rect x="1026" y="248" width="1" height="24" fill="#00ffff"/>
<rect x="1025" y="252" width="3" height="16" fill="#00ffff"/>
<rect x="1030" y="245" width="1" height="1" fill="#ff4040"/>
<rect x="1030" y="255" width="1" height="12" fill="#ff4040"/>
<rect x="1029" y="246" width="3" height="9" fill="#ff4040"/>
<rect x="1030" y="247" width="1" height="7" fill="#0a0a0a"/>
<rect x="1035" y="223" width="1" height="2" fill="#ff4040"/>
<rect x="1035" y="240" width="1" height="6" fill="#ff4040"/>
<rect x="1034" y="225" width="3" height="15" fill="#ff4040"/>
<rect x="1035" y="226" width="1" height="13" fill="#0a0a0a"/>
<rect x="1040" y="213" width="1" height="29" fill="#00ffff"/>
<rect x="1039" y="220" width="3" height="21" fill="#00ffff"/>
<rect x="1044" y="218" width="1" height="10" fill="#ff4040"/>
<rect x="1044" y="242" width="1" height="4" fill="#ff4040"/>
<rect x="1043" y="228" width="3" height="14" fill="#ff4040"/>
<rect x="1044" y="229" width="1" height="12" fill="#0a0a0a"/>
<rect x="1049" y="223" width="1" height="20" fill="#00ffff"/>
<rect x="1048" y="228" width="3" height="14" fill="#00ffff"/>
<rect x="1053" y="235" width="1" height="17" fill="#00ffff"/>
<rect x="1052" y="242" width="3" height="10" fill="#00ffff"/>
<rect x="2" y="547" width="1" height="10" fill="#ff4040"/>
<rect x="6" y="552" width="1" height="5" fill="#ff4040"/>
<rect x="6" y="557" width="1" height="9" fill="#00ffff"/>
<rect x="11" y="555" width="1" height="2" fill="#ff4040"/>
<rect x="11" y="557" width="1" height="17" fill="#00ffff"/>
<rect x="16" y="557" width="1" height="19" fill="#00ffff"/>
<rect x="20" y="557" width="1" height="17" fill="#00ffff"/>
<rect x="25" y="557" width="1" height="6" fill="#00ffff"/>
<rect x="29" y="546" width="1" height="11" fill="#ff4040"/>
<rect x="34" y="531" width="1" height="26" fill="#ff4040"/>
<rect x="39" y="528" width="1" height="29" fill="#ff4040"/>
<rect x="43" y="531" width="1" height="26" fill="#ff4040"/>
<rect x="48" y="532" width="1" height="25" fill="#ff4040"/>
<rect x="52" y="525" width="1" height="32" fill="#ff4040"/>
<rect x="57" y="522" width="1" height="35" fill="#ff4040"/>
<rect x="61" y="522" width="1" height="35" fill="#ff4040"/>
<rect x="66" y="518" width="1" height="39" fill="#ff4040"/>
<rect x="71" y="521" width="1" height="36" fill="#ff4040"/>
<rect x="75" y="522" width="1" height="35" fill="#ff4040"/>
<rect x="80" y="522" width="1" height="35" fill="#ff4040"/>
<rect x="84" y="523" width="1" height="34" fill="#ff4040"/>
<rect x="84" y="557" width="1" height="3" fill="#00ffff"/>
<rect x="89" y="523" width="1" height="34" fill="#ff4040"/>
<rect x="89" y="557" width="1" height="5" fill="#00ffff"/>
<rect x="94" y="520" width="1" height="37" fill="#ff4040"/>
<rect x="98" y="517" width="1" height="40" fill="#ff4040"/>
<rect x="103" y="515" width="1" height="42" fill="#ff4040"/>
<rect x="107" y="513" width="1" height="44" fill="#ff4040"/>
<rect x="112" y="511" width="1" height="46" fill="#ff4040"/>
<rect x="117" y="509" width="1" height="48" fill="#ff4040"/>
<rect x="121" y="506" width="1" height="51" fill="#ff4040"/>
<rect x="126" y="502" width="1" height="55" fill="#ff4040"/>
<rect x="130" y="502" width="1" height="55" fill="#ff4040"/>
<rect x="135" y="501" width="1" height="56" fill="#ff4040"/>
<rect x="140" y="500" width="1" height="57" fill="#ff4040"/>
<rect x="144" y="504" width="1" height="53" fill="#ff4040"/>
<rect x="144" y="557" width="1" height="10" fill="#00ffff"/>
<rect x="149" y="508" width="1" height="49" fill="#ff4040"/>
<rect x="149" y="557" width="1" height="21" fill="#00ffff"/>
<rect x="153" y="513" width="1" height="44" fill="#ff4040"/>
<rect x="153" y="557" width="1" height="30" fill="#00ffff"/>
<rect x="158" y="517" width="1" height="40" fill="#ff4040"/>
<rect x="158" y="557" width="1" height="30" fill="#00ffff"/>
<rect x="163" y="520" width="1" height="37" fill="#ff4040"/>
<rect x="163" y="557" width="1" height="33" fill="#00ffff"/>
<rect x="167" y="523" width="1" height="34" fill="#ff4040"/>
<rect x="167" y="557" width="1" height="33" fill="#00ffff"/>
<rect x="172" y="526" width="1" height="31" fill="#ff4040"/>
<rect x="172" y="557" width="1" height="31" fill="#00ffff"/>
<rect x="176" y="529" width="1" height="28" fill="#ff4040"/>
<rect x="176" y="557" width="1" height="29" fill="#00ffff"/>
<rect x="181" y="534" width="1" height="23" fill="#ff4040"/>
<rect x="181" y="557" width="1" height="26" fill="#00ffff"/>
<rect x="185" y="536" width="1" height="21" fill="#ff4040"/>
<rect x="185" y="557" width="1" height="26" fill="#00ffff"/>
<rect x="190" y="540" width="1" height="17" fill="#ff4040"/>
<rect x="190" y="557" width="1" height="29" fill="#00ffff"/>
<rect x="195" y="544" width="1" height="13" fill="#ff4040"/>
<rect x="195" y="557" width="1" height="29" fill="#00ffff"/>
<rect x="199" y="546" width="1" height="11" fill="#ff4040"/>
<rect x="199" y="557" width="1" height="29" fill="#00ffff"/>
<rect x="204" y="548" width="1" height="9" fill="#ff4040"/>
<rect x="204" y="557" width="1" height="28" fill="#00ffff"/>
<rect x="208" y="549" width="1" height="8" fill="#ff4040"/>
<rect x="208" y="557" width="1" height="26" fill="#00ffff"/>
<rect x="213" y="551" width="1" height="6" fill="#ff4040"/>
<rect x="213" y="557" width="1" height="26" fill="#00ffff"/>
<rect x="218" y="550" width="1" height="7" fill="#ff4040"/>
<rect x="218" y="557" width="1" height="21" fill="#00ffff"/>
<rect x="222" y="543" width="1" height="14" fill="#ff4040"/>
<rect x="222" y="557" width="1" height="13" fill="#00ffff"/>
<rect x="227" y="541" width="1" height="16" fill="#ff4040"/>
<rect x="227" y="557" width="1" height="9" fill="#00ffff"/>
<rect x="231" y="540" width="1" height="17" fill="#ff4040"/>
<rect x="231" y="557" width="1" height="6" fill="#00ffff"/>
<rect x="236" y="536" width="1" height="21" fill="#ff4040"/>
<rect x="236" y="557" width="1" height="1" fill="#00ffff"/>
<rect x="241" y="537" width="1" height="20" fill="#ff4040"/>
<rect x="245" y="540" width="1" height="17" fill="#ff4040"/>
<rect x="250" y="542" width="1" height="15" fill="#ff4040"/>
<rect x="254" y="543" width="1" height="14" fill="#ff4040"/>
<rect x="259" y="544" width="1" height="13" fill="#ff4040"/>
<rect x="264" y="544" width="1" height="13" fill="#ff4040"/>
<rect x="268" y="544" width="1" height="13" fill="#ff4040"/>
<rect x="273" y="544" width="1" height="13" fill="#ff4040"/>
<rect x="277" y="545" width="1" height="12" fill="#ff4040"/>
<rect x="277" y="557" width="1" height="1" fill="#00ffff"/>
<rect x="282" y="547" width="1" height="10" fill="#ff4040"/>
<rect x="282" y="557" width="1" height="5" fill="#00ffff"/>
<rect x="287" y="548" width="1" height="9" fill="#ff4040"/>
<rect x="287" y="557" width="1" height="7" fill="#00ffff"/>
<rect x="291" y="549" width="1" height="8" fill="#ff4040"/>
<rect x="291" y="557" width="1" height="6" fill="#00ffff"/>
<rect x="296" y="546" width="1" height="11" fill="#ff4040"/>
<rect x="300" y="536" width="1" height="21" fill="#ff4040"/>
<rect x="305" y="520" width="1" height="37" fill="#ff4040"/>
<rect x="309" y="516" width="1" height="41" fill="#ff4040"/>
<rect x="314" y="514" width="1" height="43" fill="#ff4040"/>
<rect x="319" y="509" width="1" height="48" fill="#ff4040"/>
<rect x="323" y="510" width="1" height="47" fill="#ff4040"/>
<rect x="328" y="511" width="1" height="46" fill="#ff4040"/>
<rect x="332" y="509" width="1" height="48" fill="#ff4040"/>
<rect x="337" y="507" width="1" height="50" fill="#ff4040"/>
<rect x="342" y="505" width="1" height="52" fill="#ff4040"/>
<rect x="346" y="505" width="1" height="52" fill="#ff4040"/>
<rect x="351" y="503" width="1" height="54" fill="#ff4040"/>
<rect x="355" y="499" width="1" height="58" fill="#ff4040"/>
<rect x="360" y="491" width="1" height="66" fill="#ff4040"/>
<rect x="365" y="487" width="1" height="70" fill="#ff4040"/>
<rect x="369" y="484" width="1" height="73" fill="#ff4040"/>
<rect x="374" y="481" width="1" height="76" fill="#ff4040"/>
<rect x="378" y="478" width="1" height="79" fill="#ff4040"/>
<rect x="383" y="476" width="1" height="81" fill="#ff4040"/>
<rect x="388" y="474" width="1" height="83" fill="#ff4040"/>
<rect x="392" y="473" width="1" height="84" fill="#ff4040"/>
<rect x="397" y="474" width="1" height="83" fill="#ff4040"/>
<rect x="397" y="557" width="1" height="4" fill="#00ffff"/>
<rect x="401" y="477" width="1" height="80" fill="#ff4040"/>
<rect x="401" y="557" width="1" height="9" fill="#00ffff"/>
<rect x="406" y="479" width="1" height="78" fill="#ff4040"/>
<rect x="406" y="557" width="1" height="17" fill="#00ffff"/>
<rect x="411" y="484" width="1" height="73" fill="#ff4040"/>
<rect x="411" y="557" width="1" height="30" fill="#00ffff"/>
<rect x="415" y="489" width="1" height="68" fill="#ff4040"/>
<rect x="415" y="557" width="1" height="37" fill="#00ffff"/>
<rect x="420" y="493" width="1" height="64" fill="#ff4040"/>
<rect x="420" y="557" width="1" height="39" fill="#00ffff"/>
<rect x="424" y="497" width="1" height="60" fill="#ff4040"/>
<rect x="424" y="557" width="1" height="40" fill="#00ffff"/>
<rect x="429" y="503" width="1" height="54" fill="#ff4040"/>
<rect x="429" y="557" width="1" height="49" fill="#00ffff"/>
<rect x="433" y="511" width="1" height="46" fill="#ff4040"/>
<rect x="433" y="557" width="1" height="54" fill="#00ffff"/>
<rect x="438" y="520" width="1" height="37" fill="#ff4040"/>
<rect x="438" y="557" width="1" height="63" fill="#00ffff"/>
<rect x="443" y="528" width="1" height="29" fill="#ff4040"/>
<rect x="443" y="557" width="1" height="63" fill="#00ffff"/>
<rect x="447" y="532" width="1" height="25" fill="#ff4040"/>
<rect x="447" y="557" width="1" height="52" fill="#00ffff"/>
<rect x="452" y="538" width="1" height="19" fill="#ff4040"/>
<rect x="452" y="557" width="1" height="49" fill="#00ffff"/>
<rect x="456" y="543" width="1" height="14" fill="#ff4040"/>
<rect x="456" y="557" width="1" height="51" fill="#00ffff"/>
<rect x="461" y="547" width="1" height="10" fill="#ff4040"/>
<rect x="461" y="557" width="1" height="51" fill="#00ffff"/>
<rect x="466" y="551" width="1" height="6" fill="#ff4040"/>
<rect x="466" y="557" width="1" height="53" fill="#00ffff"/>
<rect x="470" y="555" width="1" height="2" fill="#ff4040"/>
<rect x="470" y="557" width="1" height="56" fill="#00ffff"/>
<rect x="475" y="557" width="1" height="54" fill="#00ffff"/>
<rect x="479" y="557" width="1" height="53" fill="#00ffff"/>
<rect x="484" y="557" width="1" height="54" fill="#00ffff"/>
<rect x="489" y="557" width="1" height="53" fill="#00ffff"/>
<rect x="493" y="557" width="1" height="52" fill="#00ffff"/>
<rect x="498" y="557" width="1" height="53" fill="#00ffff"/>
<rect x="502" y="557" width="1" height="52" fill="#00ffff"/>
<rect x="507" y="557" width="1" height="48" fill="#00ffff"/>
<rect x="512" y="557" width="1" height="48" fill="#00ffff"/>
<rect x="516" y="557" width="1" height="49" fill="#00ffff"/>
<rect x="521" y="557" width="1" height="49" fill="#00ffff"/>
<rect x="525" y="557" width="1" height="49" fill="#00ffff"/>
<rect x="530" y="557" width="1" height="51" fill="#00ffff"/>
<rect x="535" y="557" width="1" height="50" fill="#00ffff"/>
<rect x="539" y="557" width="1" height="50" fill="#00ffff"/>
<rect x="544" y="557" width="1" height="48" fill="#00ffff"/>
<rect x="548" y="557" width="1" height="49" fill="#00ffff"/>
<rect x="553" y="557" width="1" height="53" fill="#00ffff"/>
<rect x="557" y="557" width="1" height="55" fill="#00ffff"/>
<rect x="562" y="557" width="1" height="55" fill="#00ffff"/>
<rect x="567" y="553" width="1" height="4" fill="#ff4040"/>
<rect x="567" y="557" width="1" height="55" fill="#00ffff"/>
<rect x="571" y="554" width="1" height="3" fill="#ff4040"/>
<rect x="571" y="557" width="1" height="56" fill="#00ffff"/>
<rect x="576" y="550" width="1" height="7" fill="#ff4040"/>
<rect x="576" y="557" width="1" height="56" fill="#00ffff"/>
<rect x="580" y="545" width="1" height="12" fill="#ff4040"/>
<rect x="580" y="557" width="1" height="55" fill="#00ffff"/>
<rect x="585" y="542" width="1" height="15" fill="#ff4040"/>
<rect x="585" y="557" width="1" height="54" fill="#00ffff"/>
<rect x="590" y="544" width="1" height="13" fill="#ff4040"/>
<rect x="590" y="557" width="1" height="53" fill="#00ffff"/>
<rect x="594" y="551" width="1" height="6" fill="#ff4040"/>
<rect x="594" y="557" width="1" height="55" fill="#00ffff"/>
<rect x="599" y="553" width="1" height="4" fill="#ff4040"/>
<rect x="599" y="557" width="1" height="56" fill="#00ffff"/>
<rect x="603" y="552" width="1" height="5" fill="#ff4040"/>
<rect x="603" y="557" width="1" height="55" fill="#00ffff"/>
<rect x="608" y="557" width="1" height="57" fill="#00ffff"/>
<rect x="613" y="557" width="1" height="59" fill="#00ffff"/>
<rect x="617" y="557" width="1" height="61" fill="#00ffff"/>
<rect x="622" y="557" width="1" height="62" fill="#00ffff"/>
<rect x="626" y="557" width="1" height="62" fill="#00ffff"/>
<rect x="631" y="557" width="1" height="61" fill="#00ffff"/>
<rect x="636" y="557" width="1" height="61" fill="#00ffff"/>
<rect x="640" y="557" width="1" height="61" fill="#00ffff"/>
<rect x="645" y="552" width="1" height="5" fill="#ff4040"/>
<rect x="645" y="557" width="1" height="60" fill="#00ffff"/>
<rect x="649" y="557" width="1" height="61" fill="#00ffff"/>
<rect x="654" y="557" width="1" height="62" fill="#00ffff"/>
<rect x="658" y="557" width="1" height="64" fill="#00ffff"/>
<rect x="663" y="557" width="1" height="65" fill="#00ffff"/>
<rect x="668" y="557" width="1" height="67" fill="#00ffff"/>
<rect x="672" y="557" width="1" height="69" fill="#00ffff"/>
<rect x="677" y="557" width="1" height="69" fill="#00ffff"/>
<rect x="681" y="557" width="1" height="69" fill="#00ffff"/>
<rect x="686" y="557" width="1" height="68" fill="#00ffff"/>
<rect x="691" y="555" width="1" height="2" fill="#ff4040"/>
<rect x="691" y="557" width="1" height="67" fill="#00ffff"/>
<rect x="695" y="553" width="1" height="4" fill="#ff4040"/>
<rect x="695" y="557" width="1" height="66" fill="#00ffff"/>
<rect x="700" y="557" width="1" height="67" fill="#00ffff"/>
<rect x="704" y="557" width="1" height="67" fill="#00ffff"/>
<rect x="709" y="557" width="1" height="68" fill="#00ffff"/>
<rect x="714" y="557" width="1" height="68" fill="#00ffff"/>
<rect x="718" y="557" width="1" height="67" fill="#00ffff"/>
<rect x="723" y="557" width="1" height="66" fill="#00ffff"/>
<rect x="727" y="553" width="1" height="4" fill="#ff4040"/>
<rect x="727" y="557" width="1" height="65" fill="#00ffff"/>
<rect x="732" y="550" width="1" height="7" fill="#ff4040"/>
<rect x="732" y="557" width="1" height="63" fill="#00ffff"/>
<rect x="737" y="546" width="1" height="11" fill="#ff4040"/>
<rect x="737" y="557" width="1" height="61" fill="#00ffff"/>
<rect x="741" y="541" width="1" height="16" fill="#ff4040"/>
<rect x="741" y="557" width="1" height="58" fill="#00ffff"/>
<rect x="746" y="539" width="1" height="18" fill="#ff4040"/>
<rect x="746" y="557" width="1" height="55" fill="#00ffff"/>
<rect x="750" y="536" width="1" height="21" fill="#ff4040"/>
<rect x="750" y="557" width="1" height="52" fill="#00ffff"/>
<rect x="755" y="536" width="1" height="21" fill="#ff4040"/>
<rect x="755" y="557" width="1" height="49" fill="#00ffff"/>
<rect x="760" y="537" width="1" height="20" fill="#ff4040"/>
<rect x="760" y="557" width="1" height="46" fill="#00ffff"/>
<rect x="764" y="537" width="1" height="20" fill="#ff4040"/>
<rect x="764" y="557" width="1" height="43" fill="#00ffff"/>
<rect x="769" y="536" width="1" height="21" fill="#ff4040"/>
<rect x="769" y="557" width="1" height="40" fill="#00ffff"/>
<rect x="773" y="537" width="1" height="20" fill="#ff4040"/>
<rect x="773" y="557" width="1" height="37" fill="#00ffff"/>
<rect x="778" y="535" width="1" height="22" fill="#ff4040"/>
<rect x="778" y="557" width="1" height="33" fill="#00ffff"/>
<rect x="782" y="534" width="1" height="23" fill="#ff4040"/>
<rect x="782" y="557" width="1" height="30" fill="#00ffff"/>
<rect x="787" y="534" width="1" height="23" fill="#ff4040"/>
<rect x="787" y="557" width="1" height="27" fill="#00ffff"/>
<rect x="792" y="534" width="1" height="23" fill="#ff4040"/>
<rect x="792" y="557" width="1" height="26" fill="#00ffff"/>
<rect x="796" y="536" width="1" height="21" fill="#ff4040"/>
<rect x="796" y="557" width="1" height="25" fill="#00ffff"/>
<rect x="801" y="521" width="1" height="36" fill="#ff4040"/>
<rect x="801" y="557" width="1" height="15" fill="#00ffff"/>
<rect x="805" y="510" width="1" height="47" fill="#ff4040"/>
<rect x="805" y="557" width="1" height="6" fill="#00ffff"/>
<rect x="810" y="507" width="1" height="50" fill="#ff4040"/>
<rect x="810" y="557" width="1" height="1" fill="#00ffff"/>
<rect x="815" y="503" width="1" height="54" fill="#ff4040"/>
<rect x="819" y="503" width="1" height="54" fill="#ff4040"/>
<rect x="824" y="505" width="1" height="52" fill="#ff4040"/>
<rect x="828" y="507" width="1" height="50" fill="#ff4040"/>
<rect x="833" y="512" width="1" height="45" fill="#ff4040"/>
<rect x="838" y="515" width="1" height="42" fill="#ff4040"/>
<rect x="842" y="519" width="1" height="38" fill="#ff4040"/>
<rect x="842" y="557" width="1" height="1" fill="#00ffff"/>
<rect x="847" y="522" width="1" height="35" fill="#ff4040"/>
<rect x="847" y="557" width="1" height="5" fill="#00ffff"/>
<rect x="851" y="530" width="1" height="27" fill="#ff4040"/>
<rect x="851" y="557" width="1" height="13" fill="#00ffff"/>
<rect x="856" y="534" width="1" height="23" fill="#ff4040"/>
<rect x="856" y="557" width="1" height="15" fill="#00ffff"/>
<rect x="861" y="537" width="1" height="20" fill="#ff4040"/>
<rect x="861" y="557" width="1" height="17" fill="#00ffff"/>
<rect x="865" y="537" width="1" height="20" fill="#ff4040"/>
<rect x="865" y="557" width="1" height="14" fill="#00ffff"/>
<rect x="870" y="540" width="1" height="17" fill="#ff4040"/>
<rect x="870" y="557" width="1" height="18" fill="#00ffff"/>
<rect x="874" y="546" width="1" height="11" fill="#ff4040"/>
<rect x="874" y="557" width="1" height="21" fill="#00ffff"/>
<rect x="879" y="548" width="1" height="9" fill="#ff4040"/>
<rect x="879" y="557" width="1" height="24" fill="#00ffff"/>
<rect x="884" y="552" width="1" height="5" fill="#ff4040"/>
<rect x="884" y="557" width="1" height="30" fill="#00ffff"/>
<rect x="888" y="555" width="1" height="2" fill="#ff4040"/>
<rect x="888" y="557" width="1" height="31" fill="#00ffff"/>
<rect x="893" y="554" width="1" height="3" fill="#ff4040"/>
<rect x="893" y="557" width="1" height="18" fill="#00ffff"/>
<rect x="897" y="554" width="1" height="3" fill="#ff4040"/>
<rect x="897" y="557" width="1" height="7" fill="#00ffff"/>
<rect x="902" y="552" width="1" height="5" fill="#ff4040"/>
<rect x="902" y="557" width="1" height="4" fill="#00ffff"/>
<rect x="906" y="553" width="1" height="4" fill="#ff4040"/>
<rect x="906" y="557" width="1" height="5" fill="#00ffff"/>
<rect x="911" y="552" width="1" height="5" fill="#ff4040"/>
<rect x="911" y="557" width="1" height="1" fill="#00ffff"/>
<rect x="916" y="552" width="1" height="5" fill="#ff4040"/>
<rect x="920" y="551" width="1" height="6" fill="#ff4040"/>
<rect x="925" y="551" width="1" height="6" fill="#ff4040"/>
<rect x="929" y="551" width="1" height="6" fill="#ff4040"/>
<rect x="934" y="551" width="1" height="6" fill="#ff4040"/>
<rect x="939" y="551" width="1" height="6" fill="#ff4040"/>
<rect x="943" y="551" width="1" height="6" fill="#ff4040"/>
<rect x="948" y="552" width="1" height="5" fill="#ff4040"/>
<rect x="952" y="552" width="1" height="5" fill="#ff4040"/>
<rect x="957" y="557" width="1" height="5" fill="#00ffff"/>
<rect x="962" y="557" width="1" height="12" fill="#00ffff"/>
<rect x="966" y="557" width="1" height="18" fill="#00ffff"/>
<rect x="971" y="557" width="1" height="20" fill="#00ffff"/>
<rect x="975" y="557" width="1" height="19" fill="#00ffff"/>
<rect x="980" y="557" width="1" height="23" fill="#00ffff"/>
<rect x="985" y="557" width="1" height="23" fill="#00ffff"/>
<rect x="989" y="557" width="1" height="23" fill="#00ffff"/>
<rect x="994" y="557" width="1" height="24" fill="#00ffff"/>
<rect x="998" y="557" width="1" height="25" fill="#00ffff"/>
<rect x="1003" y="557" width="1" height="25" fill="#00ffff"/>
<rect x="1008" y="557" width="1" height="29" fill="#00ffff"/>
<rect x="1012" y="557" width="1" height="30" fill="#00ffff"/>
<rect x="1017" y="557" width="1" height="32" fill="#00ffff"/>
<rect x="1021" y="557" width="1" height="40" fill="#00ffff"/>
<rect x="1026" y="557" width="1" height="44" fill="#00ffff"/>
<rect x="1030" y="557" width="1" height="44" fill="#00ffff"/>
<rect x="1035" y="557" width="1" height="44" fill="#00ffff"/>
<rect x="1040" y="557" width="1" height="44" fill="#00ffff"/>
<rect x="1044" y="557" width="1" height="44" fill="#00ffff"/>
<rect x="1049" y="557" width="1" height="44" fill="#00ffff"/>
<rect x="1053" y="557" width="1" height="44" fill="#00ffff"/>
<polyline points="2.0,540.0 11.4,540.4 20.0,540.6 25.4,540.6 29.6,540.0 34.4,539.6 39.2,539.0 43.6,538.6 48.2,538.0 52.6,537.0 57.4,535.6 61.4,534.4 66.4,533.6 71.4,532.4 75.4,531.6 80.4,530.4 84.6,530.0 89.4,529.6 94.4,528.4 98.4,527.0 103.4,526.0 108.0,525.0 111.0,523.4 115.0,522.0 125.0,519.0 135.0,515.6 145.0,512.0 155.0,509.6 165.0,507.6 175.0,505.6 185.0,504.4 195.0,503.0 205.0,502.4 213.0,502.0 216.0,502.0 222.0,502.0 230.0,501.0 240.0,500.4 250.0,499.6 260.0,498.6 270.0,497.6 280.0,497.0 290.0,496.6 300.0,495.6 310.0,494.0 317.0,492.6 319.0,491.6 321.0,491.0 327.0,489.0 335.0,487.0 345.0,484.0 355.0,480.4 365.0,475.6 375.0,471.0 385.0,467.0 395.0,462.0 405.0,457.0 415.0,452.0 423.0,448.4 426.0,448.0 432.0,446.0 440.0,444.4 450.0,442.6 460.0,442.0 470.0,442.0 480.0,442.4 490.0,443.0 500.0,444.4 510.0,446.0 520.0,448.0 528.0,450.0 533.0,451.0 565.0,461.8 585.0,468.6 643.0,490.0 650.0,493.0 660.0,497.0 670.0,501.0 680.0,505.0 690.0,509.0 696.0,511.6 698.0,512.6 705.0,516.0 715.0,520.0 725.0,524.0 735.0,528.4 745.0,532.0 755.0,535.0 765.0,538.0 775.0,540.6 785.0,542.4 795.0,544.0 801.0,544.8 802.0,545.0 810.0,544.6 820.0,544.4 830.0,543.6 840.0,542.6 850.0,542.0 860.0,541.0 870.0,540.0 880.0,539.6 890.0,539.4 900.0,539.0 906.0,538.6 907.0,538.6 925.0,538.4 935.0,537.6 945.0,537.4 955.0,537.4 965.0,537.4 975.0,537.4 981.0,538.0 982.8,537.7 989.2,538.6 998.5,539.5 1007.7,540.5 1016.9,542.9 1026.2,545.1 1035.4,547.5 1044.6,549.7 1053.5,551.9" fill="none" stroke="#0000ff" stroke-width="1" shape-rendering="crispEdges"/>
<polyline points="2.0,544.0 11.4,544.4 20.0,545.6 25.4,545.6 29.6,545.0 34.4,543.0 39.2,541.0 43.6,539.0 48.2,538.0 52.6,536.0 57.4,534.0 61.4,532.4 66.4,530.0 71.4,528.0 75.4,526.6 80.4,525.0 84.6,524.0 89.4,523.0 94.4,521.0 98.4,520.0 103.4,518.6 108.0,517.0 111.0,515.0 115.0,513.0 125.0,508.6 135.0,504.4 145.0,501.0 155.0,500.0 165.0,500.6 175.0,503.0 185.0,505.6 195.0,509.0 205.0,512.4 213.0,515.6 216.0,517.0 222.0,518.4 230.0,519.0 240.0,518.6 250.0,518.4 260.0,518.4 270.0,518.4 280.0,518.4 290.0,518.6 296.0,519.0 302.0,518.0 310.0,515.0 317.0,511.4 319.0,510.6 321.0,509.4 327.0,505.0 335.0,500.0 345.0,495.0 355.0,490.0 365.0,482.0 375.0,475.0 385.0,469.0 395.0,463.0 403.0,458.0 411.0,455.6 419.0,454.4 424.0,454.6 426.0,455.0 432.0,456.0 440.0,459.0 450.0,466.0 460.0,472.0 470.0,479.0 480.0,486.0 488.0,491.4 491.0,494.0 495.0,497.0 505.0,504.0 515.0,510.0 525.0,517.0 535.0,523.0 545.0,530.0 555.0,535.6 565.0,540.0 575.0,544.4 585.0,548.0 591.0,549.6 593.0,550.2 600.0,552.0 610.0,555.0 620.0,558.0 630.0,561.6 640.0,564.4 650.0,567.0 660.0,569.6 670.0,572.4 680.0,575.6 686.0,577.4 692.0,578.6 696.0,579.6 698.0,581.4 701.0,582.0 707.0,583.6 713.0,584.6 719.0,585.6 725.0,586.6 731.0,587.6 737.0,587.6 743.0,587.6 749.0,587.4 755.0,586.6 761.0,586.0 767.0,584.6 773.0,583.4 779.0,582.0 785.0,580.0 791.0,578.0 797.0,576.0 801.0,574.0 802.0,572.8 805.0,571.0 810.0,568.0 815.0,565.0 820.0,561.6 825.0,559.0 830.0,556.0 835.0,553.0 840.0,550.0 845.0,547.4 850.0,545.0 855.0,543.4 860.0,542.0 865.0,541.0 870.0,540.4 875.0,540.0 880.0,540.0 890.0,540.6 900.0,540.6 906.0,540.4 907.0,542.0 915.0,541.6 925.0,541.4 935.0,541.4 945.0,541.4 955.0,541.6 965.0,543.0 975.0,546.0 981.0,547.6 982.8,547.7 989.2,549.3 998.5,552.1 1007.7,555.8 1016.9,559.8 1026.2,565.4 1035.4,570.9 1044.6,575.0 1053.5,578.7" fill="none" stroke="#00ff00" stroke-width="1" shape-rendering="crispEdges"/>
<polyline points="2.0,535.0 11.4,539.0 20.0,541.6 25.4,541.0 29.6,538.0 34.4,534.0 39.2,530.0 43.6,527.0 48.2,526.0 52.6,523.0 57.4,520.0 61.4,518.6 66.4,516.4 71.4,515.6 75.4,514.4 80.4,513.6 84.6,513.0 89.4,513.0 94.4,510.0 98.4,507.6 103.4,505.4 108.0,503.0 111.0,501.0 115.0,498.0 125.0,492.0 135.0,487.4 141.0,486.0 145.0,486.4 155.0,488.0 165.0,490.0 175.0,492.0 185.0,494.0 195.0,496.6 205.0,498.4 213.0,499.4 216.0,499.4 218.0,499.6 230.0,495.6 240.0,493.4 250.0,492.4 260.0,491.6 270.0,491.4 280.0,492.0 292.0,492.4 298.0,489.0 306.0,483.0 314.0,477.0 319.0,472.4 325.0,468.0 335.0,462.0 345.0,457.6 355.0,453.0 365.0,443.0 375.0,434.0 385.0,426.0 391.0,422.0 399.0,418.4 407.0,417.4 415.0,418.0 423.0,418.6 426.0,418.6 432.0,422.0 440.0,428.0 450.0,432.4 460.0,436.0 470.0,441.0 480.0,446.0 490.0,450.0 500.0,455.0 510.0,459.6 520.0,465.0 528.0,470.0 533.0,473.0 565.0,490.0 575.0,493.0 585.0,495.0 591.0,497.6 593.0,498.8 600.0,502.0 610.0,507.0 620.0,512.0 626.0,515.0 632.0,516.4 640.0,519.6 648.0,522.0 654.0,525.0 660.0,529.0 670.0,535.0 680.0,540.0 686.0,542.4 692.0,543.6 696.0,545.6 698.0,546.2 701.0,547.0 707.0,551.0 713.0,554.0 719.0,555.0 725.0,557.0 731.0,559.4 739.0,559.6 747.0,559.6 755.0,560.4 761.0,559.6 767.0,558.0 775.0,557.4 783.0,557.0 791.0,557.4 797.0,557.0 801.0,551.0 802.0,552.4 805.0,549.0 810.0,545.0 815.0,541.6 820.0,539.6 825.0,538.0 830.0,537.0 835.0,535.6 840.0,534.4 845.0,534.4 850.0,534.4 855.0,534.0 860.0,533.6 865.0,533.6 870.0,534.0 875.0,534.6 880.0,535.0 885.0,537.0 889.0,538.6 894.0,537.0 900.0,536.6 906.0,537.0 907.0,536.6 915.0,536.0 925.0,534.6 935.0,534.0 945.0,534.0 955.0,534.4 961.0,536.0 965.0,537.6 975.0,541.6 981.0,543.4 982.8,544.0 989.2,545.4 998.5,548.4 1007.7,551.5 1013.2,554.3 1016.9,557.6 1026.2,564.5 1035.4,569.1 1044.6,572.8 1053.5,575.0" fill="none" stroke="#c0c0c0" stroke-width="1" shape-rendering="crispEdges"/>
<polyline points="2.0,539.0 11.4,546.0 20.0,550.0 25.4,549.0 29.6,544.0 34.4,537.0 39.2,531.0 43.6,528.0 48.2,527.0 52.6,522.0 57.4,518.6 61.4,516.4 66.4,513.0 71.4,512.0 75.4,512.4 80.4,512.4 84.6,513.0 89.4,512.6 94.4,509.0 98.4,507.0 103.4,504.4 108.0,502.0 111.0,500.0 115.0,497.0 125.0,490.0 135.0,487.6 141.0,487.0 145.0,491.0 155.0,498.0 165.0,505.0 175.0,511.0 185.0,518.0 195.0,524.0 205.0,527.4 213.0,529.6 216.0,529.4 222.0,526.0 230.0,522.0 236.0,519.6 242.0,518.0 250.0,517.6 260.0,517.6 270.0,517.6 276.0,517.6 282.0,520.0 290.0,522.4 296.0,519.0 302.0,509.0 310.0,498.0 317.0,490.0 319.0,488.4 321.0,486.0 327.0,481.0 335.0,477.0 345.0,473.6 351.0,471.6 357.0,464.0 361.0,458.0 367.0,452.0 375.0,446.0 381.0,442.0 387.0,439.6 392.0,437.4 397.0,438.0 403.0,439.0 409.0,443.0 415.0,449.0 421.0,453.0 424.6,456.0 426.0,458.0 432.0,467.0 440.0,478.0 450.0,490.0 460.0,498.0 470.0,508.0 480.0,514.0 488.0,519.0 491.0,520.6 493.0,522.0 499.0,527.0 505.0,529.0 511.0,531.0 517.0,536.0 525.0,541.0 531.0,546.0 539.0,550.0 547.0,553.0 553.0,557.0 559.0,559.6 565.0,559.6 571.0,561.0 577.0,561.0 583.0,559.6 587.0,559.0 591.0,560.4 593.0,561.6 596.0,563.0 604.0,564.0 610.0,567.0 616.0,570.0 622.0,572.4 630.0,573.6 638.0,573.6 644.0,574.0 648.0,573.0 654.0,577.0 660.0,581.0 666.0,584.4 672.0,587.0 678.0,588.0 684.0,588.0 690.0,588.4 696.0,588.4 698.0,589.2 701.0,590.4 707.0,592.4 713.0,593.4 719.0,593.4 725.0,593.4 731.0,593.0 737.0,590.0 743.0,587.0 749.0,585.0 755.0,582.0 761.0,579.0 767.0,576.0 773.0,573.0 779.0,570.0 785.0,568.0 791.0,566.0 797.0,564.0 800.0,558.0 801.6,555.0 802.0,552.0 805.0,547.0 810.0,541.0 815.0,537.0 820.0,534.4 825.0,532.4 830.0,531.4 835.0,531.0 840.0,529.4 845.0,529.0 850.0,530.0 855.0,531.6 860.0,532.4 865.0,533.0 870.0,534.0 875.0,536.0 880.0,538.0 884.0,542.0 889.0,545.6 894.0,543.6 900.0,542.4 906.0,543.6 907.0,543.6 913.0,543.0 919.0,541.6 925.0,541.4 943.0,542.4 953.0,542.4 959.0,545.0 965.0,549.0 975.0,555.0 981.0,558.6 982.8,559.8 989.2,561.7 998.5,565.4 1007.7,570.9 1016.9,577.4 1022.5,583.8 1026.2,587.5 1031.7,590.3 1039.1,593.4 1044.6,593.4 1050.1,593.6 1053.5,595.8" fill="none" stroke="#ff00ff" stroke-width="1" shape-rendering="crispEdges"/>
<polyline points="2.0,545.0 11.4,549.0 20.0,554.0 25.4,555.0 29.6,552.0 34.4,548.0 39.2,544.0 43.6,540.0 48.2,537.0 52.6,533.0 57.4,529.0 61.4,526.0 66.4,523.0 71.4,520.0 75.4,519.0 80.4,519.0 84.6,519.4 89.4,520.0 94.4,519.6 98.4,519.0 103.4,518.0 108.0,516.6 111.0,514.6 115.0,513.0 125.0,508.6 135.0,506.0 141.0,505.6 145.0,507.0 155.0,515.0 165.0,525.0 175.0,534.0 185.0,542.0 195.0,549.0 205.0,554.0 213.0,555.6 216.0,555.6 218.0,555.6 222.0,553.0 230.0,549.0 240.0,544.0 250.0,539.6 254.0,538.4 262.0,538.0 270.0,537.0 276.0,537.4 282.0,538.6 290.0,539.6 294.0,539.6 300.0,535.6 306.0,531.0 314.0,521.0 317.0,517.0 319.0,514.4 321.0,512.0 327.0,506.0 335.0,499.6 345.0,495.0 355.0,492.0 365.0,484.0 375.0,478.0 385.0,473.6 392.0,472.0 397.0,472.4 403.0,474.4 409.0,479.0 415.0,485.0 421.0,492.0 424.6,495.6 426.0,498.0 432.0,508.0 434.0,509.0 440.0,518.0 440.0,520.0 446.0,527.0 448.0,532.0 452.0,534.0 455.0,540.0 457.0,540.0 462.0,546.0 468.0,551.0 474.0,556.0 480.0,559.4 486.0,562.0 489.0,563.0 491.0,563.6 493.0,564.4 501.0,567.0 509.0,568.0 515.0,568.6 521.0,572.0 529.0,575.0 537.0,576.4 545.0,578.0 553.0,579.4 559.0,580.0 565.0,579.4 571.0,579.0 577.0,578.0 583.0,575.0 589.0,573.6 591.0,573.0 593.0,572.4 596.0,572.0 604.0,571.4 610.0,572.0 616.0,573.6 622.0,574.6 630.0,575.4 638.0,575.4 644.0,574.6 648.0,574.0 654.0,576.0 660.0,577.4 666.0,579.4 672.0,581.6 678.0,583.0 684.0,583.4 690.0,583.0 696.0,582.4 698.0,580.4 701.0,581.0 707.0,582.4 713.0,583.4 719.0,583.6 725.0,583.0 731.0,582.0 737.0,579.0 743.0,577.0 749.0,574.0 755.0,571.0 761.0,568.0 767.0,565.0 773.0,561.0 779.0,558.6 785.0,556.0 791.0,553.0 797.0,551.0 801.0,548.0 802.0,546.0 805.0,541.0 810.0,535.0 815.0,530.0 820.0,526.0 825.0,523.6 830.0,522.0 835.0,521.4 840.0,521.4 845.0,522.0 850.0,523.0 855.0,525.0 860.0,527.4 865.0,529.6 870.0,532.4 875.0,535.6 880.0,538.0 885.0,544.0 890.0,547.6 895.0,549.0 900.0,550.0 906.0,551.0 907.0,551.4 915.0,551.0 925.0,549.6 935.0,549.4 945.0,549.6 955.0,550.0 961.0,551.0 965.0,553.0 975.0,559.0 981.0,562.6 982.8,564.3 989.2,566.9 998.5,570.0 1007.7,573.7 1016.9,578.7 1022.5,582.9 1026.2,586.6 1031.7,590.3 1039.1,593.1 1044.6,594.0 1050.1,594.5 1053.5,596.4" fill="none" stroke="#ffff00" stroke-width="1" shape-rendering="crispEdges"/>
<polyline points="0.0,544.0 2.4,547.0 11.4,558.0 20.0,562.0 25.4,558.0 29.6,546.0 34.4,536.0 39.2,530.0 43.6,527.0 48.2,527.0 52.6,519.0 60.0,513.0 66.4,509.0 69.0,510.0 75.4,515.0 80.4,519.0 84.6,522.0 89.4,523.0 94.4,519.0 98.4,516.4 103.4,513.0 108.0,510.6 111.0,510.0 117.0,508.0 122.0,503.0 126.6,499.4 131.0,501.4 137.0,502.0 141.0,505.0 145.0,512.0 149.0,520.0 154.0,530.0 159.0,534.0 165.0,542.0 169.0,544.6 175.0,547.0 181.0,551.0 187.0,556.0 193.0,561.0 200.0,562.4 205.0,559.6 213.0,559.0 215.0,558.6 218.0,556.0 222.0,547.0 227.0,543.0 232.0,540.4 236.0,536.0 242.0,534.0 250.0,532.4 256.0,533.6 262.0,535.0 274.0,536.0 280.0,539.6 290.0,543.6 294.0,539.0 298.0,530.0 303.0,516.0 310.0,503.0 317.0,494.0 319.0,491.0 323.0,489.0 329.0,487.0 335.0,486.6 341.0,487.0 347.0,490.0 352.0,490.0 356.0,486.0 360.0,476.0 365.0,469.0 371.0,468.0 377.0,466.0 383.0,465.6 389.0,468.0 393.0,468.0 399.0,476.0 405.0,484.0 411.0,496.0 417.0,506.0 423.0,514.0 426.0,518.0 426.0,518.0 432.0,532.0 432.0,532.0 435.0,540.0 438.0,546.0 443.0,554.0 448.0,557.0 454.0,562.0 460.0,563.6 466.0,566.0 471.0,569.6 476.0,569.0 480.0,568.4 484.0,570.4 489.0,570.4 491.0,570.4 493.0,570.4 499.0,573.0 503.0,573.0 507.0,570.6 513.0,571.0 518.0,573.0 525.0,577.0 531.0,580.0 539.0,581.0 545.0,579.6 549.0,580.6 555.0,583.4 559.0,582.0 563.0,579.0 567.0,577.6 573.0,577.0 577.0,575.0 581.0,570.0 585.0,568.0 589.0,566.4 591.0,566.6 593.0,568.0 596.0,570.0 600.0,570.4 604.0,569.0 608.0,572.0 614.0,575.0 620.0,579.0 623.0,579.6 628.0,577.4 634.0,575.4 642.0,575.4 647.0,572.4 650.0,574.0 656.0,578.0 662.0,582.0 668.0,585.6 674.0,587.4 680.0,587.0 686.0,584.4 692.0,581.4 696.0,581.0 698.0,581.4 701.0,582.0 707.0,583.6 713.0,585.6 719.0,584.0 725.0,582.0 731.0,579.0 737.0,575.0 741.0,570.0 747.0,566.0 753.0,561.6 759.0,559.0 765.0,555.0 771.0,551.0 777.0,549.0 781.0,546.6 787.0,546.4 793.0,546.4 797.0,547.0 800.0,538.0 801.6,532.0 802.0,527.0 805.0,520.0 810.0,516.0 815.0,511.4 820.0,511.4 825.0,513.0 830.0,516.0 835.0,518.0 840.0,521.0 844.0,523.0 849.0,529.0 854.0,533.0 860.0,535.0 866.0,538.0 870.0,540.0 875.0,546.0 880.0,549.0 884.0,556.0 888.0,561.0 892.0,559.0 896.0,554.0 900.0,552.4 906.0,553.6 907.0,552.4 911.0,552.0 917.0,550.0 925.0,549.0 931.0,548.6 935.0,549.6 945.0,549.6 955.0,550.6 959.0,554.0 963.0,560.0 967.0,565.0 975.0,569.0 980.0,574.0 982.8,573.9 989.2,574.2 998.5,577.4 1004.0,579.2 1007.7,582.9 1012.3,585.7 1016.9,588.5 1020.6,592.1 1023.4,596.8 1026.2,599.9 1029.8,601.7 1035.4,601.4 1039.1,599.5 1044.6,595.8 1050.1,595.3 1053.5,596.8" fill="none" stroke="#ffffff" stroke-width="1" shape-rendering="crispEdges"/>
<rect x="1070" y="20" width="1" height="610" fill="#8c0000"/>
<rect x="1070" y="56" width="6" height="1" fill="#8c0000"/>
<rect x="1070" y="73" width="3" height="1" fill="#8c0000"/>
<rect x="1070" y="89" width="6" height="1" fill="#8c0000"/>
<rect x="1070" y="106" width="3" height="1" fill="#8c0000"/>
<rect x="1070" y="122" width="6" height="1" fill="#8c0000"/>
<rect x="1070" y="139" width="3" height="1" fill="#8c0000"/>
<rect x="1070" y="154" width="6" height="1" fill="#8c0000"/>
<rect x="1070" y="171" width="3" height="1" fill="#8c0000"/>
<rect x="1070" y="187" width="6" height="1" fill="#8c0000"/>
<rect x="1070" y="204" width="3" height="1" fill="#8c0000"/>
<rect x="1070" y="220" width="6" height="1" fill="#8c0000"/>
<rect x="1070" y="237" width="3" height="1" fill="#8c0000"/>
<rect x="1070" y="253" width="6" height="1" fill="#8c0000"/>
<rect x="1070" y="270" width="3" height="1" fill="#8c0000"/>
<rect x="1070" y="285" width="6" height="1" fill="#8c0000"/>
<rect x="1070" y="302" width="3" height="1" fill="#8c0000"/>
<rect x="1070" y="318" width="6" height="1" fill="#8c0000"/>
<rect x="1070" y="335" width="3" height="1" fill="#8c0000"/>
<rect x="1070" y="351" width="6" height="1" fill="#8c0000"/>
<rect x="1070" y="368" width="3" height="1" fill="#8c0000"/>
<rect x="1070" y="383" width="6" height="1" fill="#8c0000"/>
<rect x="1070" y="426" width="6" height="1" fill="#8c0000"/>
<rect x="1070" y="443" width="3" height="1" fill="#8c0000"/>
<rect x="1070" y="459" width="6" height="1" fill="#8c0000"/>
<rect x="1070" y="476" width="3" height="1" fill="#8c0000"/>
<rect x="1070" y="491" width="6" height="1" fill="#8c0000"/>
<rect x="1070" y="508" width="3" height="1" fill="#8c0000"/>
<rect x="1070" y="524" width="6" height="1" fill="#8c0000"/>
<rect x="1070" y="541" width="3" height="1" fill="#8c0000"/>
<rect x="1070" y="556" width="6" height="1" fill="#8c0000"/>
<rect x="1070" y="573" width="3" height="1" fill="#8c0000"/>
<rect x="1070" y="589" width="6" height="1" fill="#8c0000"/>
<rect x="1070" y="606" width="3" height="1" fill="#8c0000"/>
<rect x="1070" y="410" width="3" height="1" fill="#8c0000"/>
<rect x="0" y="397" width="1130" height="1" fill="#8c0000"/>
<rect x="1121" y="0" width="1" height="650" fill="#8c0000"/>
<rect x="0" y="630" width="1122" height="1" fill="#8c0000"/>
<rect x="0" y="646" width="1122" height="1" fill="#8c0000"/>
<rect x="88" y="630" width="1" height="16" fill="#8c0000"/>
<rect x="143" y="630" width="1" height="16" fill="#8c0000"/>
<rect x="221" y="630" width="1" height="16" fill="#8c0000"/>
<rect x="327" y="630" width="1" height="16" fill="#8c0000"/>
<rect x="423" y="630" width="1" height="16" fill="#8c0000"/>
<rect x="524" y="630" width="1" height="16" fill="#8c0000"/>
<rect x="602" y="630" width="1" height="16" fill="#8c0000"/>
<rect x="694" y="630" width="1" height="16" fill="#8c0000"/>
<rect x="800" y="630" width="1" height="16" fill="#8c0000"/>
<rect x="892" y="630" width="1" height="16" fill="#8c0000"/>
<rect x="956" y="630" width="1" height="16" fill="#8c0000"/>
<rect x="102" y="630" width="1" height="3" fill="#8c0000"/>
<rect x="116" y="630" width="1" height="3" fill="#8c0000"/>
<rect x="129" y="630" width="1" height="3" fill="#8c0000"/>
<rect x="157" y="630" width="1" height="3" fill="#8c0000"/>
<rect x="180" y="630" width="1" height="3" fill="#8c0000"/>
<rect x="203" y="630" width="1" height="3" fill="#8c0000"/>
<rect x="249" y="630" width="1" height="3" fill="#8c0000"/>
<rect x="267" y="630" width="1" height="3" fill="#8c0000"/>
<rect x="299" y="630" width="1" height="3" fill="#8c0000"/>
<rect x="350" y="630" width="1" height="3" fill="#8c0000"/>
<rect x="373" y="630" width="1" height="3" fill="#8c0000"/>
<rect x="400" y="630" width="1" height="3" fill="#8c0000"/>
<rect x="446" y="630" width="1" height="3" fill="#8c0000"/>
<rect x="474" y="630" width="1" height="3" fill="#8c0000"/>
<rect x="501" y="630" width="1" height="3" fill="#8c0000"/>
<rect x="543" y="630" width="1" height="3" fill="#8c0000"/>
<rect x="584" y="630" width="1" height="3" fill="#8c0000"/>
<rect x="625" y="630" width="1" height="3" fill="#8c0000"/>
<rect x="648" y="630" width="1" height="3" fill="#8c0000"/>
<rect x="671" y="630" width="1" height="3" fill="#8c0000"/>
<rect x="722" y="630" width="1" height="3" fill="#8c0000"/>
<rect x="749" y="630" width="1" height="3" fill="#8c0000"/>
<rect x="772" y="630" width="1" height="3" fill="#8c0000"/>
<rect x="823" y="630" width="1" height="3" fill="#8c0000"/>
<rect x="846" y="630" width="1" height="3" fill="#8c0000"/>
<rect x="869" y="630" width="1" height="3" fill="#8c0000"/>
<rect x="910" y="630" width="1" height="3" fill="#8c0000"/>
<rect x="924" y="630" width="1" height="3" fill="#8c0000"/>
<rect x="942" y="630" width="1" height="3" fill="#8c0000"/>
<rect x="0" y="646" width="1" height="4" fill="#8c0000"/>
<rect x="42" y="646" width="1" height="4" fill="#8c0000"/>
<rect x="73" y="646" width="1" height="4" fill="#8c0000"/>
<rect x="116" y="646" width="1" height="4" fill="#8c0000"/>
<rect x="144" y="646" width="1" height="4" fill="#8c0000"/>
<rect x="177" y="646" width="1" height="4" fill="#8c0000"/>
<rect x="207" y="646" width="1" height="4" fill="#8c0000"/>
<rect x="241" y="646" width="1" height="4" fill="#8c0000"/>
<rect x="281" y="646" width="1" height="4" fill="#8c0000"/>
<rect x="309" y="646" width="1" height="4" fill="#8c0000"/>
<rect x="332" y="646" width="1" height="4" fill="#8c0000"/>
<rect x="364" y="646" width="1" height="4" fill="#8c0000"/>
<rect x="390" y="646" width="1" height="4" fill="#8c0000"/>
<rect x="422" y="646" width="1" height="4" fill="#8c0000"/>
<rect x="480" y="646" width="1" height="4" fill="#8c0000"/>
<rect x="508" y="646" width="1" height="4" fill="#8c0000"/>
<rect x="536" y="646" width="1" height="4" fill="#8c0000"/>
<rect x="568" y="646" width="1" height="4" fill="#8c0000"/>
<rect x="599" y="646" width="1" height="4" fill="#8c0000"/>
<rect x="629" y="646" width="1" height="4" fill="#8c0000"/>
<rect x="663" y="646" width="1" height="4" fill="#8c0000"/>
<rect x="696" y="646" width="1" height="4" fill="#8c0000"/>
<rect x="735" y="646" width="1" height="4" fill="#8c0000"/>
<rect x="766" y="646" width="1" height="4" fill="#8c0000"/>
<rect x="807" y="646" width="1" height="4" fill="#8c0000"/>
<rect x="839" y="646" width="1" height="4" fill="#8c0000"/>
<rect x="871" y="646" width="1" height="4" fill="#8c0000"/>
</svg>
<div class="top"><span class="tb" style="left:28px">分时</span><span class="tb" style="left:61px">1分钟</span><span class="tb" style="left:100px">5分钟</span><span class="tb" style="left:139px">15分钟</span><span class="tb" style="left:185px">30分钟</span><span class="tb" style="left:231px">60分钟</span><span class="tb on" style="left:278px">日线</span><span class="tb" style="left:312px">周线</span><span class="tb" style="left:345px">月线</span><span class="tb" style="left:378px">多周期</span><span class="tb" style="left:422px">更多<i style="margin-left:2px;font-style:normal">&gt;</i></span><span class="bt" style="left:805px;width:35px">复权</span><span class="bt" style="left:839px;width:35px">叠加</span><span class="bt" style="left:874px;width:35px">多股</span><span class="bt" style="left:909px;width:35px">统计</span><span class="bt" style="left:944px;width:35px">画线</span><span class="bt" style="left:979px;width:35px">F10</span><span class="bt" style="left:1014px;width:35px">标记</span><span class="bt" style="left:1049px;width:35px">+自选</span><span class="bt" style="left:1084px;width:37px">返回</span></div>
<div class="ico"><svg width="22" height="19" viewBox="0 0 22 19" shape-rendering="auto"><rect x="4.5" y="3.5" width="11" height="10" rx="2.2" fill="none" stroke="#8a8a8a" stroke-width="1.2"/><rect x="11" y="5.3" width="3" height="6.6" fill="#909090"/></svg></div>
<div class="title">迈普医学(日线.前复权)</div>
<div class="circ" style="left:128px;top:23px"><svg width="12" height="12" viewBox="0 0 12 12" shape-rendering="auto"><path d="M3 4.8 L6 7.8 L9 4.8" fill="none" stroke="#151515" stroke-width="1.3"/></svg></div>
<svg style="left:1036px;top:22px" width="34" height="16" viewBox="0 0 34 16" shape-rendering="auto"><path d="M6.5 2.5 L11.5 7.5 L6.5 12.5 L1.5 7.5 Z" fill="none" stroke="#808080" stroke-width="1"/><rect x="19.5" y="2.5" width="12" height="10" rx="2" fill="none" stroke="#909090" stroke-width="1.2"/><rect x="26" y="4" width="4" height="7" fill="#909090"/></svg>
<div class="circ" style="left:2px;top:400px"><svg width="12" height="12" viewBox="0 0 12 12" shape-rendering="auto"><path d="M3 4.8 L6 7.8 L9 4.8" fill="none" stroke="#151515" stroke-width="1.3"/></svg></div>
<div class="ind"><span style="left:17.5px;color:#e8e8e8">股朋指标网</span><span style="left:82.5px;color:#f0f0f0">DIF1: -2.47</span><span style="left:148.1px;color:#ffff00">DEA1: -2.33</span><span style="left:218.1px;color:#ff00ff">MACD1: -0.29</span><span style="left:298.1px;color:#ff00ff">DIF2: -2.48</span><span style="left:362.2px;color:#00ff00">DEA2: -1.38</span><span style="left:432.8px;color:#c0c0c0">MACD2: -2.20</span><span style="left:512.5px;color:#c0c0c0">DIF3: -1.18</span><span style="left:578.1px;color:#0000ff">DEA3: 0.27</span><span style="left:643.6px;color:#f0f0f0">MACD3: -2.91</span></div>
<div class="pl" style="top:49px">90.00</div><div class="pl" style="top:82px">85.00</div><div class="pl" style="top:115px">80.00</div><div class="pl" style="top:147px">75.00</div><div class="pl" style="top:180px">70.00</div><div class="pl" style="top:213px">65.00</div><div class="pl" style="top:246px">60.00</div><div class="pl" style="top:278px">55.00</div><div class="pl" style="top:311px">50.00</div><div class="pl" style="top:344px">45.00</div><div class="pl" style="top:376px">40.00</div><div class="pl" style="top:419px">8.00</div><div class="pl" style="top:452px">6.00</div><div class="pl" style="top:484px">4.00</div><div class="pl" style="top:517px">2.00</div><div class="pl" style="top:549px">0.00</div><div class="pl" style="top:582px">-2.00</div>
<div class="ml" style="left:2px">2025年</div><div class="ml" style="left:89.5px">5</div><div class="ml" style="left:144.5px">6</div><div class="ml" style="left:222.5px">7</div><div class="ml" style="left:328.5px">8</div><div class="ml" style="left:424.5px">9</div><div class="ml" style="left:525.5px">10</div><div class="ml" style="left:603.5px">11</div><div class="ml" style="left:695.5px">12</div><div class="ml" style="left:801.5px">1</div><div class="ml" style="left:893.5px">2</div><div class="ml" style="left:957.5px">3</div>
<div class="side"><div style="position:absolute;left:0;top:25px;width:8px;height:1px;background:#8c0000"></div><div style="position:absolute;left:0;top:45px;width:8px;height:1px;background:#8c0000"></div><div style="position:absolute;left:0;top:142px;width:8px;height:1px;background:#8c0000"></div><div style="position:absolute;left:0;top:239px;width:8px;height:1px;background:#8c0000"></div><div style="position:absolute;left:0;top:336px;width:8px;height:1px;background:#8c0000"></div><div style="position:absolute;left:0;top:398px;width:8px;height:1px;background:#808000"></div><div style="position:absolute;left:0;top:417px;width:8px;height:1px;background:#808000"></div><div style="position:absolute;left:0;top:437px;width:8px;height:1px;background:#8c0000"></div><div style="position:absolute;left:0;top:457px;width:8px;height:1px;background:#8c0000"></div><div class="sr" style="top:26px">委</div><div class="sr" style="top:47px">卖</div><div class="sr" style="top:67px">卖</div><div class="sr" style="top:86px">卖</div><div class="sr" style="top:106px">卖</div><div class="sr" style="top:125px">卖</div><div class="sr" style="top:144px">买</div><div class="sr" style="top:163px">买</div><div class="sr" style="top:182px">买</div><div class="sr" style="top:202px">买</div><div class="sr" style="top:221px">买</div><div class="sr" style="top:242px">现</div><div class="sr" style="top:260px">涨</div><div class="sr" style="top:279px">涨</div><div class="sr" style="top:298px">总</div><div class="sr" style="top:316px">外</div><div class="sr" style="top:340px">换</div><div class="sr" style="top:359px">净</div><div class="sr" style="top:377px">收</div><div class="sr" style="top:399px;color:#e0e000">自</div><div class="sr" style="top:418px">注</div><div class="sr" style="top:437px">交</div><div style="position:absolute;left:1px;top:398px;width:1px;height:19px;background:#808000"></div><div class="sr" style="top:459px;font-size:15px;font-weight:bold">14:5</div><div class="sr" style="top:477px;font-size:15px;font-weight:bold">14:5</div><div class="sr" style="top:495px;font-size:15px;font-weight:bold">14:5</div><div class="sr" style="top:514px;font-size:15px;font-weight:bold">14:5</div><div class="sr" style="top:532px;font-size:15px;font-weight:bold">14:5</div><div class="sr" style="top:550px;font-size:15px;font-weight:bold">14:5</div><div class="sr" style="top:568px;font-size:15px;font-weight:bold">14:5</div><div class="sr" style="top:586px;font-size:15px;font-weight:bold">14:5</div></div>
<div class="brt" style="left:6px">指标</div><div class="brt" style="left:47px">上</div><div class="brt" style="left:823px">上</div><div class="brt" style="left:844px;color:#00e5e5">股朋</div><div class="wm"><div class="a">指标公式网</div><div class="b">www.zbgs3.com</div></div>
</body></html>
